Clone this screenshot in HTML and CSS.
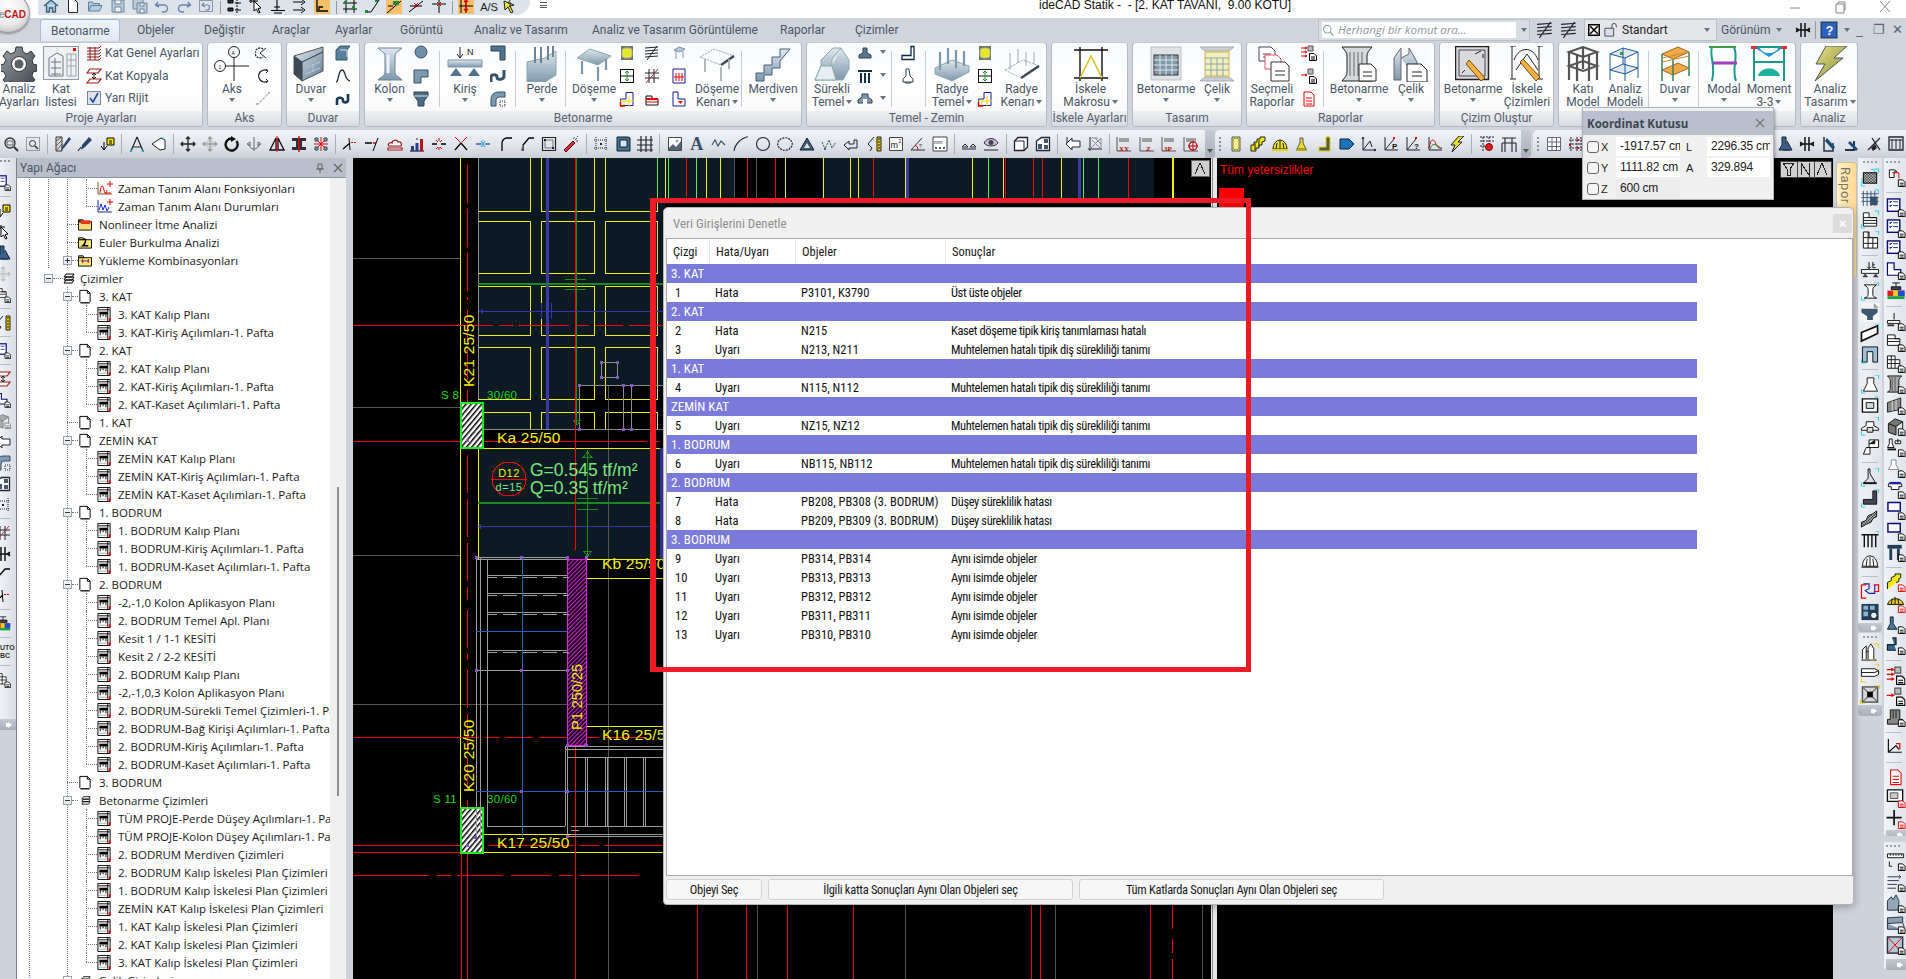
FILE: index.html
```html
<!DOCTYPE html>
<html lang="tr">
<head>
<meta charset="utf-8">
<title>ideCAD Statik</title>
<link rel="stylesheet" href="styles.css">
</head>
<body>
<svg class="sprite" width="0" height="0" aria-hidden="true">
<defs>
<linearGradient id="st" x1="0" y1="0" x2="1" y2="1"><stop offset="0" stop-color="#e6ecf2"/><stop offset="1" stop-color="#5d7c96"/></linearGradient>
<linearGradient id="st2" x1="0" y1="0" x2="0" y2="1"><stop offset="0" stop-color="#dfe7ee"/><stop offset="1" stop-color="#7d98ad"/></linearGradient>
<linearGradient id="gr" x1="0" y1="0" x2="1" y2="1"><stop offset="0" stop-color="#9aa0a8"/><stop offset="1" stop-color="#3f454d"/></linearGradient>
<linearGradient id="ye" x1="0" y1="0" x2="1" y2="1"><stop offset="0" stop-color="#e3e38a"/><stop offset="1" stop-color="#8a8a3a"/></linearGradient>
<pattern id="chk" width="3" height="3" patternUnits="userSpaceOnUse"><rect width="3" height="3" fill="#fff"/><rect width="1.5" height="1.5" fill="#000"/><rect x="1.5" y="1.5" width="1.5" height="1.5" fill="#000"/></pattern>
<pattern id="hatch" width="4" height="4" patternUnits="userSpaceOnUse" patternTransform="rotate(-50)"><rect width="4" height="4" fill="#fff"/><rect width="4" height="1.5" fill="#000"/></pattern>
<pattern id="mag" width="3" height="3" patternUnits="userSpaceOnUse" patternTransform="rotate(-45)"><rect width="3" height="3" fill="#000"/><rect width="3" height="1.2" fill="#d81fd8"/></pattern>
<g id="doc"><path d="M8.5 8.5h4.5l2.5 2.5v4.500H8.500z" fill="#fff" stroke="#000"/><path d="M10 12h4M10 14h4" stroke="#000"/></g>
<g id="docr"><path d="M8.500 8.500h4.500l2.500 2.500v4.500H8.500z" fill="#fff" stroke="#e00000"/><path d="M10 12h4M10 14h4" stroke="#e00000"/></g>
<path id="cy" d="M11 1.500h3.500V5M1.500 10.500v4H5" fill="none" stroke="#18d8ee"/>
<path id="yc" d="M11 1.500h3.500V5M1.500 10.500v4H5" fill="none" stroke="#f2c800"/>
</defs>
<!-- small / toolbar -->
<symbol id="home" viewBox="0 0 16 16"><path d="M1 8l7-6 7 6M3.500 7v7h3v-4h3v4h3V7" fill="#a9c6dc" stroke="#385d7c" stroke-width="1.300"/></symbol>
<symbol id="new" viewBox="0 0 16 16"><path d="M3.500 1.500h6l3 3v10h-9z" fill="#fff" stroke="#222"/></symbol>
<symbol id="open" viewBox="0 0 16 16"><path d="M1.500 13V4h4l1 1.500h6V8M1.500 13l2.500-5.500h11L12.500 13z" fill="#b5cde0" stroke="#5f7f9a"/></symbol>
<symbol id="save" viewBox="0 0 16 16"><path d="M2 2h12v12H2z" fill="#b9c9d8" stroke="#6f8aa2"/><path d="M5 2h6v4H5zM5 9h6v5H5z" fill="#eef2f6" stroke="#6f8aa2"/></symbol>
<symbol id="saves" viewBox="0 0 16 16"><path d="M1 1h10v10H1z" fill="#b9c9d8" stroke="#6f8aa2"/><path d="M5 5h10v10H5z" fill="#b9c9d8" stroke="#6f8aa2"/><path d="M8 5h4v3H8zM8 11h4v4H8z" fill="#eef2f6" stroke="#6f8aa2"/></symbol>
<symbol id="undo" viewBox="0 0 16 16"><path d="M4 4l-2.500 3L5 9M2 7h8a3.500 3.500 0 0 1 0 7H8" fill="none" stroke="#6e84b3" stroke-width="1.500"/></symbol>
<symbol id="redo" viewBox="0 0 16 16"><path d="M12 4l2.500 3L11 9M14 7H6a3.500 3.500 0 0 0 0 7h2" fill="none" stroke="#6e84b3" stroke-width="1.500"/></symbol>
<symbol id="undob" viewBox="0 0 16 16"><path d="M1.500 2.500h13v11h-13z" fill="none" stroke="#8a96a8"/><path d="M6 4.500l-2 2.500 3 2M4 7h5a2.500 2.500 0 0 1 0 5H7" fill="none" stroke="#6e84b3" stroke-width="1.200"/></symbol>
<symbol id="q1" viewBox="0 0 16 16"><path d="M2 2h5v3H2zM2 10h5v3H2z" fill="#333" stroke="#000"/><path d="M11 1v14" stroke="#000" stroke-dasharray="2 1"/><path d="M9 5h6M9 12h6" stroke="#000"/></symbol>
<symbol id="q2" viewBox="0 0 16 16"><path d="M3 1v4M6 1v4M1 3h9" stroke="#000"/><path d="M6 3l7 7-3 .500 2 4-1.500.500-2-4-2.500 2z" fill="#fff" stroke="#000"/></symbol>
<symbol id="q3" viewBox="0 0 16 16"><path d="M7 1v11M1 12.500h14M4 9h6M4 15h8" stroke="#000" stroke-width="1.100"/></symbol>
<symbol id="q4" viewBox="0 0 16 16"><path d="M1 4h10M1 12h10M9 1l4 3-4 3M9 9l4 3-4 3" fill="none" stroke="#000"/></symbol>
<symbol id="q5" viewBox="0 0 16 16"><rect width="16" height="16" fill="#f8bf6b"/><path d="M3 1v12h11M5 12V9h4" fill="none" stroke="#000" stroke-width="1.300"/></symbol>
<symbol id="q6" viewBox="0 0 16 16"><path d="M4 1v14M12 1v14M1 5h14M1 11h14" stroke="#000"/><path d="M2 3h3v3H2zM10 8h3v3h-3z" fill="#1d8a3a"/></symbol>
<symbol id="q7" viewBox="0 0 16 16"><path d="M1 14h6l8-12" fill="none" stroke="#000"/><path d="M1 12h3v3H1zM11 1h3v3h-3z" fill="#1d8a3a"/></symbol>
<symbol id="q8" viewBox="0 0 16 16"><rect width="16" height="16" fill="#f8bf6b"/><path d="M1 15L15 3" stroke="#000"/><path d="M7 3h6v4H7z" fill="#1d8a3a"/><path d="M2 8h5" stroke="#000"/></symbol>
<symbol id="q9" viewBox="0 0 16 16"><path d="M1 14L15 3M2 8h12" stroke="#000"/><path d="M6 5l4 4M10 5L6 9" stroke="#d00"/></symbol>
<symbol id="q10" viewBox="0 0 16 16"><path d="M1 6h14M8 1v14" stroke="#000"/><path d="M6 4l4 4M10 4L6 8" stroke="#d00"/></symbol>
<symbol id="q11" viewBox="0 0 16 16"><rect width="16" height="16" fill="#f8bf6b"/><path d="M3 1v14M1 8h14M8 1v14" stroke="#000"/><path d="M8 2v11M6 4l2-2 2 2M6 11l2 2 2-2" fill="none" stroke="#d00" stroke-width="1.300"/></symbol>
<symbol id="q13" viewBox="0 0 16 16"><path d="M2 3l10 4-4 1 3 6-2 1-3-6-3 3z" fill="#e6e62a" stroke="#222"/><path d="M9 1l-3 4h3l-2 4" fill="none" stroke="#222"/></symbol>
<symbol id="z1" viewBox="0 0 16 16"><circle cx="7" cy="7" r="5" fill="none" stroke="#333" stroke-width="1.300"/><path d="M4 5h6v4H4z" fill="none" stroke="#666"/><path d="M11 11l4 4" stroke="#333" stroke-width="2"/></symbol>
<symbol id="z2" viewBox="0 0 16 16"><path d="M1.500 1.500h13v13h-13z" fill="none" stroke="#555" stroke-dasharray="1 1"/><circle cx="7.500" cy="7.500" r="3" fill="none" stroke="#333"/><path d="M10 10l3 3" stroke="#333" stroke-width="1.500"/></symbol>
<symbol id="w1" viewBox="0 0 16 16"><path d="M1 1h6v14H1z" fill="#d8d8d8" stroke="#333"/><path d="M1 5l6-4M1 10l6-6M1 15l6-7" stroke="#555"/><path d="M14 1l2 2-7 9-3 2 1-3z" fill="#26456e"/></symbol>
<symbol id="w2" viewBox="0 0 16 16"><path d="M12 1l3 3-7 7-4 3 1-5z" fill="#26456e"/><path d="M4 11L1 15" stroke="#000"/></symbol>
<symbol id="w3" viewBox="0 0 16 16"><path d="M8 2h7v7H8z" fill="#ffe600" stroke="#000"/><path d="M10 5h3M10 7h3" stroke="#000"/><path d="M5 6v7M2 10l3 4 3-4" fill="none" stroke="#000"/></symbol>
<symbol id="w4" viewBox="0 0 16 16"><path d="M8 1L2 15M8 1l6 14M4 11h8" fill="none" stroke="#222" stroke-width="1.200"/><circle cx="2" cy="15" r="1.200" fill="#2aa"/><circle cx="14" cy="15" r="1.200" fill="#2aa"/></symbol>
<symbol id="w5" viewBox="0 0 16 16"><path d="M1 8l9-6 4 2v9l-5 1z" fill="#fff" stroke="#222"/><path d="M12 1v3" stroke="#2cc"/></symbol>
<symbol id="m1" viewBox="0 0 16 16"><path d="M8 1v14M1 8h14M6 3l2-2 2 2M6 13l2 2 2-2M3 6L1 8l2 2M13 6l2 2-2 2" fill="none" stroke="#222" stroke-width="1.300"/></symbol>
<symbol id="m2" viewBox="0 0 16 16"><path d="M8 1v14M1 8h14M6 3l2-2 2 2M6 13l2 2 2-2M3 6L1 8l2 2M13 6l2 2-2 2" fill="none" stroke="#999" stroke-width="1.300"/><path d="M5 5h6v6H5z" fill="none" stroke="#bbb"/></symbol>
<symbol id="m3" viewBox="0 0 16 16"><path d="M12.500 5A6 6 0 1 1 8 2.500" fill="none" stroke="#111" stroke-width="2.400"/><path d="M7 0l5 3-5 3z" fill="#111"/></symbol>
<symbol id="m4" viewBox="0 0 16 16"><path d="M8 1v14M3 8a5 5 0 0 0 10 0M1 8l3-2v4zM15 8l-3-2v4z" fill="none" stroke="#667"/></symbol>
<symbol id="m5" viewBox="0 0 16 16"><path d="M7 2v12H1zM9 2v12h6z" fill="none" stroke="#111" stroke-width="1.300"/><path d="M8 0v16" stroke="#d00"/></symbol>
<symbol id="m6" viewBox="0 0 16 16"><path d="M1 2h14v3H1zM1 11h14v3H1zM5 5h6v6H5z" fill="#26323c"/><path d="M8 0v16" stroke="#e00" stroke-width="1.500"/></symbol>
<symbol id="m7" viewBox="0 0 16 16"><path d="M8 1v14M1 8h14M4 4l8 8M12 4l-8 8" stroke="#e00"/><path d="M2 2h3v3H2zM11 2h3v3h-3zM2 11h3v3H2zM11 11h3v3h-3z" fill="#8aa" stroke="#345"/></symbol>
<symbol id="t1" viewBox="0 0 16 16"><path d="M1 13L8 7" stroke="#000" stroke-width="1.300"/><path d="M9 6.500h6" stroke="#d00" stroke-dasharray="2 1"/><path d="M7 2l1 12" stroke="#000"/></symbol>
<symbol id="t2" viewBox="0 0 16 16"><path d="M1 7h7" stroke="#000" stroke-width="1.500"/><path d="M9 7h3" stroke="#d00" stroke-width="1.500"/><path d="M14 2L9 15" stroke="#000"/></symbol>
<symbol id="t3" viewBox="0 0 16 16"><path d="M2 10c-2-2 1-4 3-3 0-3 5-4 6-1 3-1 4 2 3 4zM1 12h14v2H1z" fill="#fff" stroke="#a01818" stroke-width="1.200"/></symbol>
<symbol id="t4" viewBox="0 0 16 16"><path d="M1 15h14" stroke="#000"/><path d="M2 10h3v5H2z" fill="#2b3d8a"/><path d="M6.500 7h3v8h-3z" fill="#2b3d8a"/><path d="M11 3h3v12h-3z" fill="#b8101a"/><path d="M7 3h2" stroke="#222"/></symbol>
<symbol id="t5" viewBox="0 0 16 16"><path d="M1 8h5M10 8h5" stroke="#000" stroke-width="1.300"/><path d="M8 2v3M8 11v3M5 4l2 2M11 4L9 6M5 13l2-2M11 13l-2-2" stroke="#d00"/></symbol>
<symbol id="t6" viewBox="0 0 16 16"><path d="M2 14l6-7 6 7" fill="none" stroke="#000" stroke-width="1.300"/><path d="M2 1l5 5M14 1L9 6" stroke="#d00"/></symbol>
<symbol id="t7" viewBox="0 0 16 16"><path d="M1 8h5M10 8h5" stroke="#116"/><path d="M6 5l4 6M10 5l-4 6" stroke="#2ad"/><path d="M4 8h8M8 4v8" stroke="#2ad" stroke-dasharray="1 1"/></symbol>
<symbol id="t8" viewBox="0 0 16 16"><path d="M5 15V7a5 5 0 0 1 5-5h5" fill="none" stroke="#000" stroke-width="1.300"/></symbol>
<symbol id="t9" viewBox="0 0 16 16"><path d="M4 15V9l6-7h5" fill="none" stroke="#000" stroke-width="1.300"/><path d="M2 15l2-6" stroke="#888"/></symbol>
<symbol id="t10" viewBox="0 0 16 16"><path d="M1.500 1.500h13v13h-13z" fill="none" stroke="#222" stroke-width="1.200"/><path d="M4 4h8v8H4z" fill="none" stroke="#777"/><path d="M3 3h2v2H3zM11 11h2v2h-2z" fill="#222"/></symbol>
<symbol id="t11" viewBox="0 0 16 16"><path d="M1 14l9-9 2 2-9 9z" fill="#d5303a" stroke="#601"/><path d="M12 4l2-2M11 1v2M15 5h-2M14 1l1-1" stroke="#555"/></symbol>
<symbol id="g1" viewBox="0 0 16 16"><path d="M3 1v14M13 1v14M1 4h14M1 12h14" stroke="#223" stroke-dasharray="1 1"/><path d="M7 7h2v2H7z" fill="#222"/></symbol>
<symbol id="g2" viewBox="0 0 16 16"><path d="M2 1h11l2 1v13H2z" fill="#47708e" stroke="#123"/><path d="M5 4h7v7H5z" fill="#dbe6ee" stroke="#123"/></symbol>
<symbol id="g3" viewBox="0 0 16 16"><path d="M4 0v16M9 0v16M14 0v16M0 4h16M0 9h16M0 14h16" stroke="#223" stroke-width="1.200"/></symbol>
<symbol id="d1" viewBox="0 0 16 16"><path d="M1.500 1.500h13v13h-13z" fill="#fff" stroke="#444"/><path d="M2 12l4-4 3 3 5-6v9H2z" fill="#567"/><circle cx="10" cy="5" r="1.500" fill="#8ab"/></symbol>
<symbol id="d3" viewBox="0 0 16 16"><path d="M1 9l3-5 3 6 3-5 4 4" fill="none" stroke="#35506a" stroke-width="1.100"/></symbol>
<symbol id="d4" viewBox="0 0 16 16"><path d="M1 15C2 8 8 2 15 1" fill="none" stroke="#223" stroke-width="1.100"/><path d="M13 0h2v2h-2z" fill="#888"/></symbol>
<symbol id="d5" viewBox="0 0 16 16"><circle cx="8" cy="8" r="6.500" fill="none" stroke="#223" stroke-width="1.100"/></symbol>
<symbol id="d6" viewBox="0 0 16 16"><path d="M3 4c1-3 9-3 10 0 3 1 3 7 0 8-1 3-9 3-10 0-3-1-3-7 0-8z" fill="none" stroke="#223" stroke-dasharray="2 1" stroke-width="1.200"/></symbol>
<symbol id="d7" viewBox="0 0 16 16"><path d="M1 14L8 2l7 12z" fill="#3f5e72" stroke="#123"/><path d="M5 12l3-5 3 5z" fill="#d8e2ea"/></symbol>
<symbol id="d8" viewBox="0 0 16 16"><path d="M1 6l3 7 4-9 3 8 4-6" fill="none" stroke="#35506a" stroke-dasharray="2 1"/><circle cx="4" cy="13" r="1" fill="#35506a"/></symbol>
<symbol id="d9" viewBox="0 0 16 16"><path d="M1 9l5-4v3h5V4h3v8H6v2z" fill="none" stroke="#223"/></symbol>
<symbol id="d10" viewBox="0 0 16 16"><path d="M11 1h4v14h-4z" fill="#eac400" stroke="#222"/><path d="M12 3h2M12 6h2M12 9h2M12 12h2" stroke="#222"/><path d="M8 1L2 8l4 4-2 3" fill="none" stroke="#222"/></symbol>
<symbol id="d11" viewBox="0 0 16 16"><path d="M1.500 1.500h13v13h-13z" fill="#fff" stroke="#444"/><text x="2.500" y="12" class="ic">m</text><text x="10.500" y="7" class="is">2</text></symbol>
<symbol id="d12" viewBox="0 0 16 16"><path d="M1 14L12 2M1 14h14" fill="none" stroke="#333"/><path d="M8 14a5 5 0 0 0-3-5" fill="none" stroke="#d00"/><text x="9" y="12" class="is">?</text></symbol>
<symbol id="d13" viewBox="0 0 16 16"><path d="M1 1h14v14H1z" fill="#fff" stroke="#444"/><text x="2" y="8" class="is">mm</text><path d="M3 11h2v2H3zM7 11h2v2H7zM11 11h2v2h-2z" fill="#456"/></symbol>
<symbol id="l1" viewBox="0 0 16 16"><path d="M1 13h14M1 11l3-3 3 3zM9 11l3-3 3 3z" fill="none" stroke="#223"/></symbol>
<symbol id="l2" viewBox="0 0 16 16"><path d="M1 7c3-6 11-6 14 0-3 4-11 4-14 0z" fill="#cbd" stroke="#334"/><circle cx="8" cy="6.500" r="2.500" fill="#445"/><path d="M1 14h14" stroke="#223"/></symbol>
<symbol id="p1" viewBox="0 0 16 16"><path d="M1.500 5v9.500H11L14.500 11V1.500H5z" fill="#fff" stroke="#223" stroke-width="1.300"/><path d="M1.500 5h9.500v9.500" fill="none" stroke="#223"/></symbol>
<symbol id="p2" viewBox="0 0 16 16"><path d="M1.500 5l5-3.500h8v13h-13z" fill="#fff" stroke="#223" stroke-width="1.300"/><path d="M3 8h4v5H3zM9 3h4v4H9zM9 9h4v4H9z" fill="#46596b"/></symbol>
<symbol id="a1" viewBox="0 0 16 16"><path d="M1 8l6-6v3h8v6H7v3z" fill="#fff" stroke="#223"/><path d="M2 1v6" stroke="#223"/></symbol>
<symbol id="a2" viewBox="0 0 16 16"><path d="M3 1v14M1 13h14" stroke="#223"/><path d="M3 13L14 2M3 2h8M14 2v11M5 4l9 9M8 2l6 6" stroke="#889"/></symbol>
<symbol id="xy" viewBox="0 0 16 16"><path d="M1 1v14h14M3 3h10M3 5h10" fill="none" stroke="#555"/><text x="3" y="15" class="ir">XY</text></symbol>
<symbol id="zz" viewBox="0 0 16 16"><path d="M1 1v14h14M3 3h10M3 5h10" fill="none" stroke="#555"/><text x="7" y="15" class="ir">Z</text></symbol>
<symbol id="p3" viewBox="0 0 16 16"><path d="M1 1v14h14M3 3h10M3 5h10" fill="none" stroke="#555"/><text x="3" y="15" class="ir">3P</text></symbol>
<symbol id="pc" viewBox="0 0 16 16"><path d="M1 1v14h14M3 3h10M3 5h10" fill="none" stroke="#555"/><circle cx="10" cy="10" r="4" fill="none" stroke="#b00" stroke-width="1.200"/><path d="M10 5v10M5 10h10" stroke="#b00"/></symbol>
<symbol id="y1" viewBox="0 0 16 16"><path d="M4 1h8v14H4z" fill="#ecec22" stroke="#556"/><rect x="5" y="2" width="6" height="12" rx="3" fill="#fff27a" stroke="#888"/></symbol>
<symbol id="y2" viewBox="0 0 16 16"><path d="M1 15V9h3V6h3V3h3V1h5v4l-3 1v3H9v3H6v3z" fill="#f2e800" stroke="#223"/><path d="M5 14V7M9 11V4" stroke="#223"/></symbol>
<symbol id="y3" viewBox="0 0 16 16"><path d="M1 13a7 9 0 0 1 14 0z" fill="#f0e020" stroke="#223"/><path d="M4 13l1-6M8 13V4M12 13l-1-6" stroke="#223"/><path d="M0 14h16" stroke="#e8d400" stroke-width="2"/></symbol>
<symbol id="y4" viewBox="0 0 16 16"><path d="M6 2h3v5l3 6H3l3-6z" fill="#eedc20" stroke="#556"/><path d="M2 14h11" stroke="#bba800" stroke-width="2"/></symbol>
<symbol id="y5" viewBox="0 0 16 16"><path d="M10 1h4v14H3v-4h7z" fill="#585858" stroke="#e6d400"/></symbol>
<symbol id="y6" viewBox="0 0 16 16"><path d="M1 3h9l5 5-5 5H1z" fill="#1e72bc" stroke="#123"/></symbol>
<symbol id="gf1" viewBox="0 0 16 16"><path d="M2 1v13h13M2 14L9 5l2 6" fill="none" stroke="#223"/><path d="M2 1L1 3M2 1l1 2M15 14l-2-1M15 14l-2 1" stroke="#223"/></symbol>
<symbol id="gf2" viewBox="0 0 16 16"><path d="M2 1v13h13M2 14L11 3" fill="none" stroke="#223"/><path d="M10 1h2v2h-2z" fill="#e00"/><text x="9" y="13" class="ib">P</text></symbol>
<symbol id="gf3" viewBox="0 0 16 16"><path d="M2 1v13h13M2 14L11 3" fill="none" stroke="#223"/><path d="M10 1h2v2h-2z" fill="#e00"/><text x="9" y="13" class="ib">?</text></symbol>
<symbol id="gf4" viewBox="0 0 16 16"><path d="M2 1v13h13" fill="none" stroke="#223"/><path d="M2 12C4 1 7 3 9 8s4 4 6 4" fill="none" stroke="#d00"/><path d="M3 13C5 7 8 7 15 13" fill="none" stroke="#1a8a3a"/></symbol>
<symbol id="zap" viewBox="0 0 16 16"><path d="M10 0h5L9 6h4L3 16l3-7H2z" fill="#e8dc2a" stroke="#223"/></symbol>
<symbol id="gr1" viewBox="0 0 16 16"><path d="M1 1h14M1 5h14M4 1v14M10 1v14M1 10h9" stroke="#223" stroke-dasharray="2 1"/><circle cx="10" cy="11" r="3.500" fill="#e02020" stroke="#800"/></symbol>
<symbol id="gr2" viewBox="0 0 16 16"><path d="M1 2h14M1 7h14M4 2v14M11 2v14M1 7v9M15 7v9" stroke="#223" stroke-width="1.100"/></symbol>
<symbol id="gr3" viewBox="0 0 16 16"><path d="M1.500 1.500h13v13h-13zM1.500 6h13M1.500 10.500h13M6 1.500v13M10.500 1.500v13" fill="#fff" stroke="#667"/></symbol>
<symbol id="gr4" viewBox="0 0 16 16"><path d="M3 1v14M9 1v14M13 1v14M1 4h14M1 8h14M1 12h14" stroke="#223" stroke-dasharray="2 1"/><path d="M1 8h2v2H1zM9 3h2v2H9zM9 11h2v2H9z" fill="#d00"/></symbol>
<symbol id="v1" viewBox="0 0 16 16"><path d="M5 1h4v8l4 5H2l3-5z" fill="#3a628a" stroke="#123"/><path d="M10 5l5 9H6" fill="#3a5f88" stroke="#123"/></symbol>
<symbol id="v2" viewBox="0 0 16 16"><path d="M6 1v14M10 1v14M1 8h14M1 6l3 2-3 2M15 6l-3 2 3 2" fill="none" stroke="#111" stroke-width="1.500"/></symbol>
<symbol id="v3" viewBox="0 0 16 16"><path d="M3 1v14h9V7" fill="none" stroke="#234" stroke-width="1.500"/><path d="M6 2l8 9-2 3-8-9z" fill="#1f4d7a"/></symbol>
<symbol id="v4" viewBox="0 0 16 16"><path d="M1 14h9V5" fill="none" stroke="#234" stroke-width="2"/><path d="M6 5l8 8-2 2-8-8z" fill="#1f4d7a"/></symbol>
<symbol id="v5" viewBox="0 0 16 16"><path d="M2 14L14 2M6 2l8 12" stroke="#223" stroke-width="1.300"/><path d="M5 12l4-4 2 4-4 3z" fill="#223"/></symbol>
<symbol id="v6" viewBox="0 0 16 16"><path d="M1 1h14v13H1z" fill="none" stroke="#223" stroke-width="1.300"/><path d="M4 3v10M8 3v10M12 3v10M2 4h12" stroke="#223"/></symbol>
<!-- ribbon small -->
<symbol id="s-genel" viewBox="0 0 16 16"><path d="M1 3h12l2-2M1 6h12l2-2M1 9h12l2-2M1 12h12l2-2M1 15h12l2-2" fill="none" stroke="#8a1a1a"/><path d="M4 2v13M9 2v13" stroke="#8a1a1a"/></symbol>
<symbol id="s-kop" viewBox="0 0 16 16"><path d="M1 5L4 1h11l-3 4zM1 15l3-4h11l-3 4z" fill="#fff" stroke="#a01818" stroke-width="1.200"/><path d="M8 5v6M6 7l2-2 2 2M6 9l2 2 2-2" fill="none" stroke="#222"/></symbol>
<symbol id="s-chk" viewBox="0 0 16 16"><rect x="1.500" y="1.500" width="13" height="13" fill="#dfe4ea" stroke="#7a8794"/><path d="M4 8l3 4 5-9" fill="none" stroke="#1f4d9a" stroke-width="1.600"/></symbol>
<symbol id="s-a1" viewBox="0 0 16 16"><path d="M8 4a5 5 0 1 0 0 8" fill="none" stroke="#223" stroke-dasharray="2 1" stroke-width="1.300"/><path d="M5 8l6-5M5 8l6 5" stroke="#223"/></symbol>
<symbol id="s-a2" viewBox="0 0 16 16"><path d="M13 3a6 6 0 1 0 0 10" fill="none" stroke="#223" stroke-width="1.300"/><path d="M11 1l2 2-2 2M11 11l2 2-2 2" stroke="#223" fill="none"/></symbol>
<symbol id="s-a3" viewBox="0 0 16 16"><path d="M2 14L14 2" stroke="#b5b5b5" stroke-dasharray="3 1" stroke-width="1.300"/><path d="M1 12h2v2H1zM13 1h2v2h-2z" fill="#b5b5b5"/></symbol>
<symbol id="s-d1" viewBox="0 0 16 16"><path d="M1 5l4-4h10l-3 4v10H1z" fill="#577f9b" stroke="#33566e"/><path d="M5 5h7v7" fill="none" stroke="#e0e8ee"/></symbol>
<symbol id="s-d2" viewBox="0 0 16 16"><path d="M1 14c3 0 2-12 6-12s2 10 8 11" fill="none" stroke="#1a2a3a" stroke-width="1.300"/></symbol>
<symbol id="s-d3" viewBox="0 0 16 16"><path d="M2 14V9c0-3 6-3 6 0v1c0 2 5 2 5-1V3" fill="none" stroke="#1a3a5a" stroke-width="2.600"/></symbol>
<symbol id="s-k1" viewBox="0 0 16 16"><circle cx="8" cy="7" r="6" fill="#6f8ea8" stroke="#35536c"/></symbol>
<symbol id="s-k2" viewBox="0 0 16 16"><path d="M1 2h14v7H8v6H1z" fill="#7d9ab0" stroke="#35536c"/></symbol>
<symbol id="s-k3" viewBox="0 0 16 16"><path d="M1 1h14v4l-4 5v5H5v-5L1 5z" fill="#4e6c84" stroke="#2c4355"/><path d="M1 5h14" stroke="#dfe8ef"/></symbol>
<symbol id="s-b1" viewBox="0 0 16 16"><path d="M1 1h14v14h-5V6H1z" fill="#4f7590" stroke="#2c4355"/></symbol>
<symbol id="s-b2" viewBox="0 0 16 16"><path d="M1 14V9c0-3 6-3 6 0v1c0 2 7 2 7-2V2" fill="none" stroke="#35536c" stroke-width="3"/></symbol>
<symbol id="s-b3" viewBox="0 0 16 16"><path d="M1 15V8a7 7 0 0 1 7-7h7v5H9a3 3 0 0 0-3 3v6z" fill="#7d9ab0" stroke="#35536c"/><path d="M10 10h5v5h-5z" fill="none" stroke="#223" stroke-dasharray="1 1"/></symbol>
<symbol id="s-ye" viewBox="0 0 16 16"><path d="M2 1h12v14H2z" fill="#6f7a5a"/><rect x="3" y="3" width="10" height="10" rx="3" fill="#e8e82a" stroke="#aaa"/></symbol>
<symbol id="s-bx" viewBox="0 0 16 16"><rect x="1.500" y="1.500" width="13" height="13" fill="#fff" stroke="#111"/><path d="M2 8h12" stroke="#111"/><path d="M8 3v10M6 5l2-2 2 2M6 11l2 2 2-2" fill="none" stroke="#0a9a2a"/></symbol>
<symbol id="s-crn" viewBox="0 0 16 16"><path d="M7 1.500h7v7H14v6H1.500V8H7z" fill="#fff" stroke="#1a1a9a"/><path d="M1 10h14M5 10v5M10 5v10" stroke="#e8d400"/><path d="M1.500 11v4H6" fill="none" stroke="#e00" stroke-width="1.500"/></symbol>
<symbol id="s-st" viewBox="0 0 16 16"><path d="M1 3l13-1M1 6l13-1M1 9l13-1M1 12l13-1M3 15L13 1" stroke="#223"/></symbol>
<symbol id="s-hs" viewBox="0 0 16 16"><path d="M1 5h14M1 10h14M5 1v14M10 1v14" stroke="#223"/><path d="M2 15L14 1" stroke="#a33"/></symbol>
<symbol id="s-bl" viewBox="0 0 16 16"><path d="M2 5h6v3h6v6H2z" fill="#fff" stroke="#111"/><path d="M2 8h12" stroke="#e00" stroke-width="2"/><path d="M2 11h12" stroke="#e00"/></symbol>
<symbol id="s-tb" viewBox="0 0 16 16"><path d="M3 5l5-3 6 2-5 3zM5 6v8M12 6v7" fill="#b5c7d6" stroke="#7d98ad"/></symbol>
<symbol id="s-r1" viewBox="0 0 16 16"><path d="M2 1h12v14H2z" fill="#fff" stroke="#1a1a9a"/><path d="M5 5v8M8 5v8M11 5v8M3 9h10" stroke="#d00" fill="none"/></symbol>
<symbol id="s-r2" viewBox="0 0 16 16"><path d="M2 1v14h12V8H7V1z" fill="#fff" stroke="#1a1a9a"/><path d="M7 10h5l-2.500 3z" fill="#e00"/></symbol>
<symbol id="s-t1" viewBox="0 0 16 16"><path d="M6 3h4v5l4 2v3H2v-3l4-2z" fill="#5a7a93" stroke="#2c4355"/></symbol>
<symbol id="s-t2" viewBox="0 0 16 16"><path d="M1 2h14v2H1z" fill="#12303f"/><path d="M3 5h2v10H3zM7 5h2v10H7zM11 5h2v10h-2z" fill="#12303f"/></symbol>
<symbol id="s-t3" viewBox="0 0 16 16"><path d="M5 3h6v3l4 3v3H1V9l4-3z" fill="#7e97aa" stroke="#2c4355"/><path d="M6 8h4v5H6z" fill="#fff"/></symbol>
<symbol id="s-l" viewBox="0 0 16 16"><path d="M11 1.500h3v13H2v-4h9z" fill="#fff" stroke="#0c2a4a" stroke-width="1.300"/></symbol>
<symbol id="s-ft" viewBox="0 0 16 16"><path d="M6 1h3l1 7 3 3v3H3v-3l3-3z" fill="#fff" stroke="#2c4355"/><path d="M5 14v1h6v-1" stroke="#2c4355" fill="none"/></symbol>
<symbol id="s-rp1" viewBox="0 0 16 16"><path d="M0 3h6M0 7h6M0 11h6" stroke="#e00"/><path d="M4 2l2 1-2 1M4 6l2 1-2 1M4 10l2 1-2 1" stroke="#e00" fill="none"/><path d="M7 1h5v5H7z" fill="#bbb" stroke="#555"/><use href="#doc"/></symbol>
<symbol id="s-rp2" viewBox="0 0 16 16"><path d="M0 7h6" stroke="#e00"/><path d="M4 6l2 1-2 1" stroke="#e00" fill="none"/><path d="M7 1h5v5H7z" fill="#bbb" stroke="#555"/><use href="#doc"/></symbol>
<symbol id="s-rp3" viewBox="0 0 16 16"><path d="M3 1h7l3 3v11H3z" fill="#fff" stroke="#e00"/><path d="M5 7h6M5 10h6M5 13h6" stroke="#e00"/></symbol>
<!-- ribbon big -->
<symbol id="b-gear" viewBox="0 0 36 36"><path d="M15 1h6l1 5 4 2 4-3 4 5-3 4 1 4 4 1v6l-4 1-1 4 3 4-5 4-3-3-4 2-1 4h-6l-1-4-4-2-4 3-4-4 3-4-2-4-4-1v-6l4-1 2-4-3-4 4-5 4 3 4-2z" fill="url(#gr)" stroke="#333"/><circle cx="18" cy="18" r="7.500" fill="#fff" stroke="#333"/><circle cx="18" cy="18" r="4.500" fill="#5a6068"/></symbol>
<symbol id="b-list" viewBox="0 0 36 36"><rect x="0.500" y="0.500" width="35" height="33" fill="#eef0f2" stroke="#8d9aa5"/><path d="M6 12l8-5 6 3v20H6zM8 16h10M8 22h10M8 28h10M12 12v18" fill="none" stroke="#6d7882"/><path d="M24 8h9v22h-9zM24 14h9M24 20h9M28 8v22" fill="none" stroke="#9aa5ae"/><path d="M30 2h3v3h-3z" fill="#e00"/></symbol>
<symbol id="b-aks" viewBox="0 0 36 36"><circle cx="20" cy="6" r="5.500" fill="none" stroke="#222"/><circle cx="6" cy="20" r="5.500" fill="none" stroke="#222"/><path d="M20 11v24M11 20h24" stroke="#222"/><text x="17.500" y="9" class="is">A</text><text x="4.500" y="23" class="is">1</text></symbol>
<symbol id="b-duvar" viewBox="0 0 36 36"><path d="M1 10L30 1v24L9 35 1 28z" fill="url(#st)" stroke="#555"/><path d="M1 10l8 6v19M9 16L30 6" fill="none" stroke="#333"/><path d="M1 10v18l8 7V16z" fill="#3c4a55"/><path d="M13 22l14-6M13 28l14-6M20 18v8" stroke="#b9c6d0"/></symbol>
<symbol id="b-kolon" viewBox="0 0 36 36"><path d="M6 2h24c-2 3-6 3-7 7v18c1 4 5 4 7 7H6c2-3 6-3 7-7V9C12 5 8 5 6 2z" fill="url(#st2)" stroke="#6c8397"/><path d="M16 9v18" stroke="#eef3f7" stroke-width="3"/></symbol>
<symbol id="b-kiris" viewBox="0 0 36 36"><path d="M1 14h34v7H1z" fill="url(#st2)" stroke="#7d98ad"/><path d="M3 30l6-8 6 8zM21 30l6-8 6 8z" fill="#4f7590"/><path d="M13 1v11M10 8l3 4 3-4" fill="none" stroke="#222"/><text x="20" y="9" class="ic">N</text></symbol>
<symbol id="b-perde" viewBox="0 0 36 36"><path d="M3 16l18-4 11-7v24l-11 7H3z" fill="url(#st2)" stroke="#8aa"/><path d="M11 1v16M17 1v16M24 0v14M29 0v11" stroke="#6c8397" stroke-width="2"/></symbol>
<symbol id="b-dos" viewBox="0 0 36 36"><path d="M1 12L14 3l21 7-13 9z" fill="url(#st2)" stroke="#8aa"/><path d="M6 15v13M22 21v14M30 13v11" stroke="#7d98ad" stroke-width="2.200"/></symbol>
<symbol id="b-dosk" viewBox="0 0 36 36"><path d="M1 11l14-8 20 7-13 9z" fill="none" stroke="#9aa" stroke-dasharray="2 1"/><path d="M22 19l13-9" stroke="#3a4a58" stroke-width="2.500"/><path d="M6 13v13M22 21v14M30 13v10" stroke="#9aa" stroke-width="1.600"/></symbol>
<symbol id="b-mer" viewBox="0 0 36 36"><path d="M1 35V27H9V19h8v-8h8V3h10L25 15v7h-8v7H9v6z" fill="url(#st2)" stroke="#40607c"/></symbol>
<symbol id="b-sur" viewBox="0 0 36 36"><path d="M1 34l6-14V14l12-12 8 0 8 12v9L29 34z" fill="url(#st2)" stroke="#8aa"/><path d="M7 20h11l4 14H1zM18 20v-7L27 2" fill="#e6edf2" stroke="#8aa"/></symbol>
<symbol id="b-rad" viewBox="0 0 36 36"><path d="M1 22l17-8 17 6v6L18 35 1 28z" fill="url(#st2)" stroke="#8aa"/><path d="M6 6v18M14 2v16M22 4v18M30 5v15" stroke="#7d98ad" stroke-width="2.200"/></symbol>
<symbol id="b-radk" viewBox="0 0 36 36"><path d="M1 24l18-10 16 6-18 12z" fill="none" stroke="#9aa" stroke-dasharray="2 1"/><path d="M17 32l18-12" stroke="#3a4a58" stroke-width="2.500"/><path d="M6 7v17M14 3v14M22 6v14M30 6v12" stroke="#9aa"/></symbol>
<symbol id="b-isk" viewBox="0 0 36 36"><path d="M1 4h34M1 32h34M7 1v34M29 1v34" stroke="#111" stroke-width="1.400"/><path d="M7 32L18 10l11 22" fill="none" stroke="#e0c020" stroke-width="1.600"/></symbol>
<symbol id="b-tb" viewBox="0 0 36 36"><rect x="3" y="1" width="30" height="33" fill="#dfe3e6" stroke="#b9c0c7"/><rect x="6" y="9" width="24" height="20" fill="#7f99a8" stroke="#333"/><path d="M6 14h24M6 19h24M6 24h24M12 9v20M18 9v20M24 9v20" stroke="#dfe7ec"/></symbol>
<symbol id="b-tc" viewBox="0 0 36 36"><path d="M1 1h34l-5 4H6zM1 35h34l-5-4H6z" fill="#c9ced2" stroke="#aab"/><rect x="6" y="6" width="24" height="24" fill="#f4eebc" stroke="#c8b14a"/><path d="M6 12h24M6 18h24M6 24h24M12 12v18M18 12v18M24 12v18" stroke="#8aa"/></symbol>
<symbol id="b-sec" viewBox="0 0 36 36"><path d="M5 1h12l4 4v10H5z" fill="#fff" stroke="#445"/><path d="M9 8h8M9 11h8" stroke="#445"/><path d="M11 9h12l4 4v10H11z" fill="#fff" stroke="#e25060"/><path d="M17 16h14l4 4v15H17z" fill="#fff" stroke="#333"/><path d="M21 25h10M21 29h10" stroke="#333"/></symbol>
<symbol id="b-rb" viewBox="0 0 36 36"><path d="M1 1h30c-3 4-5 5-5 9v16c0 4 2 5 5 9H1c3-4 5-5 5-9V10C6 6 4 5 1 1z" fill="#d5d8dc" stroke="#222"/><path d="M9 6v24M13 6v24M17 6v24M21 6v24" stroke="#666"/><path d="M18 18h12l5 5v12H18z" fill="#fff" stroke="#222"/><path d="M22 26h9M22 30h9" stroke="#222"/></symbol>
<symbol id="b-rc" viewBox="0 0 36 36"><path d="M1 34V12L8 2v32zM8 12l8-4V2l8 14v18" fill="url(#st2)" stroke="#667"/><path d="M14 18h14l6 6v12H14z" fill="#fff" stroke="#222"/><path d="M19 26h10M19 30h10" stroke="#222"/></symbol>
<symbol id="b-cb" viewBox="0 0 36 36"><rect x="0.500" y="0.500" width="33" height="33" fill="#d9dade" stroke="#222" stroke-width="1.500"/><path d="M4 4h26v26H4z" fill="none" stroke="#444"/><path d="M20 8l6-3M28 8v4M7 27l3-3" stroke="#222"/><path d="M14 14l16 18-4 3L11 18z" fill="#f2b040" stroke="#7a4c10"/></symbol>
<symbol id="b-ci" viewBox="0 0 36 36"><path d="M3 0v33M1 0h6M1 33h6M30 0v33M28 0h6M28 33h6M5 14C10 0 24 0 29 14M7 24l11-16 11 16" fill="none" stroke="#222"/><path d="M14 13l17 18-4 4-16-19z" fill="#f2b040" stroke="#7a4c10"/></symbol>
<symbol id="b-kati" viewBox="0 0 36 36"><path d="M4 6l14-5 14 5-14 5zM4 20l14-5 14 5-14 5z" fill="none" stroke="#555" stroke-width="2"/><path d="M4 6v28M12 9v26M24 9v26M32 6v28M18 1v22" stroke="#555" stroke-width="2.200"/></symbol>
<symbol id="b-amo" viewBox="0 0 36 36"><path d="M3 8l13-6 15 4-13 6zM3 24l13-6 15 4-13 6z" fill="#dfe8ee" stroke="#1a5a9a"/><path d="M3 8v26M18 12v23M31 6v26M16 2v16" stroke="#1a5a9a"/><path d="M13 6h3v3h-3z" fill="#20a040"/></symbol>
<symbol id="b-adu" viewBox="0 0 36 36"><path d="M5 8l16-7 11 5-16 7zM5 24l16-7 11 5-16 7z" fill="#f0a848" stroke="#a06a18"/><path d="M5 8v27M16 13v22M32 6v24" stroke="#3a8a5a" stroke-width="1.600"/><path d="M5 12l27-6M5 16l27-6" stroke="#d08a30"/></symbol>
<symbol id="b-mod" viewBox="0 0 36 36"><path d="M3 1h27M6 1c-3 10 4 16 0 34M28 1c5 12-3 20 2 34" fill="none" stroke="#189a88" stroke-width="2"/><path d="M7 17h24" stroke="#a040c0" stroke-width="3"/><path d="M3 1h27" stroke="#3aa040" stroke-width="2"/></symbol>
<symbol id="b-mom" viewBox="0 0 36 36"><path d="M3 1v34M33 1v34M3 1h30M3 16h30" fill="none" stroke="#189a88" stroke-width="2"/><path d="M3 1l6 0c0 8 18 8 18 0h6L18 11z" fill="#1f8fe0"/><path d="M7 30c2-10 20-10 22 0z" fill="#20b0a0"/><path d="M0 0h6v3H0zM30 0h6v3h-6z" fill="#e03030"/></symbol>
<symbol id="b-zap" viewBox="0 0 36 36"><path d="M14 0h21L22 12h9L3 35l10-17H4z" fill="url(#ye)" stroke="#555"/></symbol>
<!-- strip icons -->
<symbol id="c1" viewBox="0 0 20 20"><use href="#cy"/><rect x="3" y="5" width="14" height="11" fill="url(#chk)" stroke="#000"/><path d="M15 1h4v4M1 15v4h4" fill="none" stroke="#18d8ee"/></symbol>
<symbol id="c2" viewBox="0 0 20 20"><path d="M3 2v16M7 2v16M11 2v16M15 2v16M1 5h18M1 9h18M1 13h18" stroke="#3a5a78"/><rect x="10" y="8" width="8" height="9" fill="#35536c"/><path d="M15 1h4v4" fill="none" stroke="#18d8ee"/></symbol>
<symbol id="c3" viewBox="0 0 20 20"><path d="M3 3h6v5h8v9H3zM3 8h14M3 11h14M3 14h14" fill="#fff" stroke="#111"/><path d="M15 1h4v4M1 15v4h4" fill="none" stroke="#18d8ee"/></symbol>
<symbol id="c4" viewBox="0 0 20 20"><path d="M3 1h6v6h9v11H3zM3 7h15M3 13h15M8 1v17M13 7v11" fill="#fff" stroke="#111"/><path d="M15 0h4v4" fill="none" stroke="#18d8ee"/></symbol>
<symbol id="c5" viewBox="0 0 20 20"><path d="M1 9h18v4H1z" fill="#fff" stroke="#111"/><path d="M2 17l3-4 3 4zM13 17l3-4 3 4z" fill="#445"/><path d="M9 1v7M7 6l2 2 2-2M13 1v6h3M13 4h2" fill="none" stroke="#111"/></symbol>
<symbol id="c6" viewBox="0 0 20 20"><path d="M4 3h13c-3 2-4 3-4 5v5c0 2 1 3 4 4H4c3-1 4-2 4-4V8c0-2-1-3-4-5z" fill="#fff" stroke="#111"/><path d="M15 0h4v4M1 15v4h4" fill="none" stroke="#18d8ee"/></symbol>
<symbol id="c7" viewBox="0 0 20 20"><rect width="20" height="20" fill="#f5f5f5"/><path d="M14 0l5 5h-5z" fill="#999"/><path d="M1 6h17v4l-5 4v4H7v-4L1 10z" fill="#3d5a72"/></symbol>
<symbol id="c8" viewBox="0 0 20 20"><path d="M1 18V9L18 2v8z" fill="#fff" stroke="#111" stroke-width="1.800"/><path d="M15 0h4v4" fill="none" stroke="#18d8ee"/></symbol>
<symbol id="c9" viewBox="0 0 20 20"><path d="M2 2h16v16h-5V7H7v11H2z" fill="#9ec0da" stroke="#111"/><path d="M1 15v4h4" fill="none" stroke="#18d8ee"/></symbol>
<symbol id="c10" viewBox="0 0 20 20"><path d="M7 3h7v6l4 8H3l4-8z" fill="#fff" stroke="#111"/><path d="M15 0h4v4M1 15v4h4" fill="none" stroke="#18d8ee"/></symbol>
<symbol id="c11" viewBox="0 0 20 20"><path d="M2 3h16v14H2z" fill="#fff" stroke="#111" stroke-width="1.500"/><path d="M6 7h8v6H6z" fill="#cdd" stroke="#111"/><path d="M15 1h4" stroke="#18d8ee"/></symbol>
<symbol id="c12" viewBox="0 0 20 20"><path d="M6 5h8v4l5 3v2H1v-2l5-3z" fill="#fff" stroke="#111"/><path d="M7 11h6v5H7z" fill="#ddd" stroke="#111"/><path d="M15 0h4v4M1 15v4h4" fill="none" stroke="#18d8ee"/></symbol>
<symbol id="c13" viewBox="0 0 20 20"><path d="M3 17l3-7h4v7zM9 2h10v8H9z" fill="#fff" stroke="#111"/><path d="M9 6h6V2" fill="#000" stroke="#111"/></symbol>
<symbol id="c14" viewBox="0 0 20 20"><path d="M8 1h2v5l6 10H3l5-5z" fill="#dde" stroke="#111"/><path d="M3 16h14" stroke="#111" stroke-width="2"/><path d="M15 0h4v4M1 15v4h4" fill="none" stroke="#18d8ee"/></symbol>
<symbol id="c15" viewBox="0 0 20 20"><path d="M13 2h4v14H3v-5h10z" fill="#445" stroke="#111"/><path d="M15 0h4v4M1 15v4h4" fill="none" stroke="#18d8ee"/></symbol>
<symbol id="c16" viewBox="0 0 20 20"><path d="M1 13l5-2 2-5 5-2 4-3v6l-4 2-2 4-5 2-5 3z" fill="url(#chk)" stroke="#111"/></symbol>
<symbol id="c17" viewBox="0 0 20 20"><path d="M1 4h18M4 4v13M8 4v13M12 4v13M16 4v13" stroke="#111" stroke-width="1.500"/><path d="M15 0h4v2" fill="none" stroke="#18d8ee"/></symbol>
<symbol id="c18" viewBox="0 0 20 20"><path d="M2 15a8 11 0 0 1 16 0z" fill="#fff" stroke="#111"/><path d="M6 15l1-8M10 15V5M14 15l-1-8M1 16h18" stroke="#111"/></symbol>
<symbol id="c19" viewBox="0 0 20 20"><path d="M3 2h6v5l-4 2 4 3h6V3" fill="none" stroke="#1a1ac0" stroke-width="1.200"/><path d="M1 3h5M1 3v14h5" fill="none" stroke="#e00" stroke-width="1.300"/><path d="M14 3h5v7h-5" fill="none" stroke="#e00" stroke-width="1.300"/></symbol>
<symbol id="c20" viewBox="0 0 20 20"><rect x="1" y="1" width="18" height="17" fill="#1f3e58"/><path d="M3 3h5v4H3zM10 3h5v4h-5zM3 9h5v5H3z" fill="#8fb3ce"/><circle cx="14" cy="13" r="3.500" fill="#e6eef4" stroke="#111"/></symbol>
<symbol id="c21" viewBox="0 0 20 20"><path d="M2 17V7l4-4v14M8 17V5l3-4 3 5v11M6 9h2M1 18h16" fill="#fff" stroke="#111"/><path d="M14 1h5v4M14 18h-3" fill="none" stroke="#f2c800"/></symbol>
<symbol id="c22" viewBox="0 0 20 20"><path d="M1 5h14l4 2v4l-4 2H1zM1 9h14l4-2" fill="#fff" stroke="#111"/><path d="M15 0h4v3M1 15v4h5" fill="none" stroke="#f2c800"/></symbol>
<symbol id="c23" viewBox="0 0 20 20"><rect x="2" y="2" width="16" height="16" fill="#d4d5d9" stroke="#555" stroke-width="1.500"/><path d="M3 3l14 14M17 3L3 17" stroke="#222"/><rect x="7" y="7" width="6" height="6" fill="#000"/><path d="M14 0h6v4M0 16v4h5" fill="none" stroke="#f2c800"/></symbol>
<symbol id="e1" viewBox="0 0 20 20"><path d="M3 2h6l2 2H8v6H3z" fill="#fff" stroke="#111"/><path d="M6 5h7v6" fill="none" stroke="#e00"/><g transform="translate(4 4) scale(1)"><use href="#doc"/></g></symbol>
<symbol id="e2" viewBox="0 0 20 20"><rect x="1" y="1" width="13" height="13" fill="#fff" stroke="#0a0a7a" stroke-width="1.500"/><path d="M3 4l1 1 2-2M3 8l1 1 2-2M7 4h5M7 8h5" stroke="#0a2aa0"/><g transform="translate(4 4)"><use href="#doc"/></g></symbol>
<symbol id="e3" viewBox="0 0 20 20"><path d="M1 2h7v7h7v6H1z" fill="#fff" stroke="#0a0a7a" stroke-width="1.300"/><g transform="translate(4 4)"><use href="#doc"/></g></symbol>
<symbol id="e4" viewBox="0 0 20 20"><path d="M6 1h8M10 1v4M5 5h10v3H5z" stroke="#111" fill="#445"/><path d="M1 9h18v6H1z" fill="#e02020"/><path d="M7 9h7v6H7z" fill="#e8d020"/><path d="M12 9h7v6h-7z" fill="#2050d0"/><path d="M1 15h18v3H1z" fill="#20a040"/></symbol>
<symbol id="e5" viewBox="0 0 20 20"><path d="M8 1v7M1 9h13v3H1z" fill="#fff" stroke="#111"/><path d="M1 14h7" stroke="#333" stroke-width="2"/><g transform="translate(4 4)"><use href="#doc"/></g></symbol>
<symbol id="e6" viewBox="0 0 20 20"><path d="M1 2h8v4h5v7H1zM1 6h13M1 9h13" fill="#fff" stroke="#111"/><g transform="translate(4 4)"><use href="#doc"/></g></symbol>
<symbol id="e7" viewBox="0 0 20 20"><path d="M1 2h8v4h5v9H1zM5 2v13M9 6v9M1 6h8M1 10h13" fill="#fff" stroke="#111"/><g transform="translate(4 4)"><use href="#doc"/></g></symbol>
<symbol id="e8" viewBox="0 0 20 20"><path d="M1 1h15c-2 2-3 3-3 5v8c0 2 1 3 3 4H1c2-1 3-2 3-4V6C4 4 3 3 1 1z" fill="#aaa" stroke="#111"/><path d="M6 2v15M9 2v15" stroke="#555"/><g transform="translate(4 4)"><use href="#doc"/></g></symbol>
<symbol id="e9" viewBox="0 0 20 20"><path d="M1 7l14-5v12L1 17z" fill="#888" stroke="#222"/><path d="M6 5v11M10 4v11" stroke="#ddd"/><g transform="translate(4 4)"><use href="#doc"/></g></symbol>
<symbol id="e10" viewBox="0 0 20 20"><path d="M2 7l7-5 8 3-7 5zM2 7v9l8 3v-9M17 5v8" fill="#777" stroke="#111"/><g transform="translate(4 4)"><use href="#doc"/></g></symbol>
<symbol id="e11" viewBox="0 0 20 20"><path d="M3 1h3v5l2 4H1l2-4zM9 3h6v3H9zM12 1v4" fill="#fff" stroke="#111"/><path d="M1 12h9" stroke="#111" stroke-width="2"/><g transform="translate(4 4)"><use href="#doc"/></g></symbol>
<symbol id="e12" viewBox="0 0 20 20"><path d="M5 1h5v5l3 5H2l3-5z" fill="#fff" stroke="#888"/><g transform="translate(4 4)"><use href="#doc"/></g></symbol>
<symbol id="e13" viewBox="0 0 20 20"><path d="M2 4h14v3h-3v3H5V7H2z" fill="#fff" stroke="#111"/><path d="M3 3h12" stroke="#1a1ac0" stroke-width="2"/><g transform="translate(4 4)"><use href="#doc"/></g></symbol>
<symbol id="e14" viewBox="0 0 20 20"><path d="M1.500 1.500h13v9h-13z" fill="#fff" stroke="#0a0a7a" stroke-width="1.500"/><g transform="translate(4 4)"><use href="#doc"/></g></symbol>
<symbol id="e15" viewBox="0 0 20 20"><path d="M1 2h15v4H1z" fill="#1f3e58"/><path d="M3 6h3v12H3zM11 6h3v12h-3z" fill="#1f3e58"/><g transform="translate(4 4)"><use href="#doc"/></g></symbol>
<symbol id="e16" viewBox="0 0 20 20"><path d="M1 17V10l4-2V5l4-2V1h6v4l-2 1v3l-3 1" fill="#f2e800" stroke="#111"/><g transform="translate(4 4)"><use href="#docr"/></g></symbol>
<symbol id="e17" viewBox="0 0 20 20"><path d="M1 11a9 9 0 0 1 17 0z" fill="#e8d020" stroke="#111"/><path d="M5 11l1-6M9 11V3M13 11l-1-6" stroke="#111"/><g transform="translate(4 4)"><use href="#docr"/></g></symbol>
<symbol id="e18" viewBox="0 0 20 20"><path d="M4 2h3v7l4 6H1l3-6z" fill="#4e7a9c" stroke="#123"/><g transform="translate(4 4)"><use href="#doc"/></g></symbol>
<symbol id="e19" viewBox="0 0 20 20"><path d="M6 2h4v7H1v6h9" fill="#38648c" stroke="#123" stroke-width="1.300"/><g transform="translate(4 4)"><use href="#doc"/></g></symbol>
<symbol id="e20" viewBox="0 0 20 20"><use href="#s-rp1" width="20" height="20"/></symbol>
<symbol id="e21" viewBox="0 0 20 20"><use href="#s-rp2" width="20" height="20"/></symbol>
<symbol id="e22" viewBox="0 0 20 20"><path d="M4 2h10v10h3v5H1v-5h3z" fill="#888" stroke="#111"/><path d="M7 3v8M10 3v8" stroke="#222"/><g transform="translate(4 4)"><use href="#doc"/></g></symbol>
<symbol id="e23" viewBox="0 0 20 20"><path d="M2 1v14h14M2 15L10 8l3 4" fill="none" stroke="#111" stroke-width="1.300"/><path d="M10 6h4v6" fill="none" stroke="#e00" stroke-width="1.300"/></symbol>
<symbol id="e24" viewBox="0 0 20 20"><g transform="translate(1 1) scale(1.100)"><use href="#s-rp3" width="16" height="16"/></g></symbol>
<symbol id="e25" viewBox="0 0 20 20"><path d="M1 1h16v12H1z" fill="#fff" stroke="#111" stroke-width="1.400"/><path d="M4 4h8v6H4z" fill="#ccc" stroke="#555"/><g transform="translate(4 4)"><use href="#docr"/></g></symbol>
<symbol id="e26" viewBox="0 0 20 20"><path d="M0 8h16M8 0v16" stroke="#111" stroke-width="1.800"/><g transform="translate(4 4)"><use href="#docr"/></g></symbol>
<symbol id="e27" viewBox="0 0 20 20"><path d="M1 2h17v4H1z" fill="#fff" stroke="#111"/><path d="M4 2v2M7 2v2M10 2v2M13 2v2M16 2v2" stroke="#111"/><path d="M3 10v5h3" fill="none" stroke="#111"/><g transform="translate(4 4)"><use href="#doc"/></g></symbol>
<symbol id="e28" viewBox="0 0 20 20"><path d="M1 4h14M1 8h12M1 12h10M1 16h9" stroke="#334"/><path d="M13 2l2 2-2 2" stroke="#334" fill="none"/><g transform="translate(4 4)"><use href="#doc"/></g></symbol>
<symbol id="e29" viewBox="0 0 20 20"><path d="M1 17V7l4-4 2 3 3-5 3 6v10H1z" fill="#94a8ba" stroke="#234"/><g transform="translate(4 4)"><use href="#doc"/></g></symbol>
<symbol id="e30" viewBox="0 0 20 20"><path d="M1 3l16-1v6L1 9zM1 9v6h14" fill="#8aa0b2" stroke="#234"/><path d="M17 8l2 6" stroke="#234"/><g transform="translate(4 4)"><use href="#doc"/></g></symbol>
<symbol id="e31" viewBox="0 0 20 20"><rect x="1" y="1" width="16" height="17" fill="#b5c5d5" stroke="#234" stroke-width="1.500"/><path d="M2 2l14 15M16 2L2 17" stroke="#e00"/><g transform="translate(4 4)"><use href="#doc"/></g></symbol>
<!-- tree icons -->
<symbol id="tp" viewBox="0 0 14 16"><path d="M1.500 1.500h8l3 3v9l-1 1h-9l-1-1z" fill="#fff" stroke="#000" stroke-width="1"/><path d="M9.500 1.500v3h3" fill="none" stroke="#000"/><path d="M2 15.500h10" stroke="#888"/></symbol>
<symbol id="td" viewBox="0 0 14 16"><path d="M.5.500h13v15H.500z" fill="#fff" stroke="#000"/><path d="M1 3h12" stroke="#000"/><path d="M2 5h9v3H2z" fill="#000"/><path d="M3 8v3M6 8v2M9 8v3" stroke="#000"/><path d="M11 1v14" stroke="#000"/><path d="M12 12h2v3h-2z" fill="#e00"/><path d="M1 13h9" stroke="#aaa"/></symbol>
<symbol id="ts" viewBox="0 0 12 12"><path d="M3 2h8L9 5H1zM3 5h8L9 8H1zM3 8h8L9 11H1z" fill="#fff" stroke="#000"/></symbol>
<symbol id="tz1" viewBox="0 0 16 14"><path d="M1 1v12h14" fill="none" stroke="#7a5a20"/><path d="M3 12c1-10 3-8 4-3s2 4 3 0" fill="none" stroke="#e00"/><path d="M8 12h6M13 0v6M10 3h6" stroke="#e00"/></symbol>
<symbol id="tz2" viewBox="0 0 16 14"><path d="M1 1v12h14" fill="none" stroke="#1a2a8a"/><path d="M2 11l2-6 2 6 2-5 2 6 2-4" fill="none" stroke="#1a2ae0"/><path d="M13 0v6M10 3h6" stroke="#e00"/></symbol>
<symbol id="tf1" viewBox="0 0 15 13"><path d="M.5 3.500h14v9H.500z" fill="#f6dc7a" stroke="#000"/><path d="M.5 1.500h5l1 2H.500z" fill="#e43a18" stroke="#000"/><path d="M3 2h10v4H3z" fill="#e43a18"/></symbol>
<symbol id="tf2" viewBox="0 0 15 13"><path d="M.5 3.500h14v9H.500z" fill="#f6e47a" stroke="#000"/><path d="M.5 1.500h5l1 2H.500z" fill="#f0c860" stroke="#000"/><path d="M7 2c2 2 1 6-2 8h6" fill="none" stroke="#000" stroke-width="1.500"/></symbol>
<symbol id="tf3" viewBox="0 0 15 13"><path d="M.5 3.500h14v9H.500z" fill="#f6e47a" stroke="#000"/><path d="M.5 1.500h5l1 2H.500z" fill="#f0c860" stroke="#000"/><path d="M3 7h9" stroke="#1a2ac0"/><path d="M5 5v4M11 5v4" stroke="#d00"/></symbol>
</svg>

<header class="titlebar">
  <div class="qat">
    <svg class="i i16"><use href="#home"/></svg><svg class="i i16"><use href="#new"/></svg><svg class="i i16"><use href="#open"/></svg><svg class="i i16"><use href="#save"/></svg><svg class="i i16"><use href="#saves"/></svg><svg class="i i16"><use href="#undo"/></svg><svg class="i i16"><use href="#redo"/></svg><svg class="i i16"><use href="#undob"/></svg><i class="qsep"></i><svg class="i i16"><use href="#q1"/></svg><svg class="i i16"><use href="#q2"/></svg><svg class="i i16"><use href="#q3"/></svg><svg class="i i16"><use href="#q4"/></svg><svg class="i i16"><use href="#q5"/></svg><i class="qsep"></i><svg class="i i16"><use href="#q6"/></svg><svg class="i i16"><use href="#q7"/></svg><svg class="i i16"><use href="#q8"/></svg><svg class="i i16"><use href="#q9"/></svg><svg class="i i16"><use href="#q10"/></svg><i class="qsep"></i><svg class="i i16"><use href="#q11"/></svg><span class="as">A/S</span><svg class="i i16"><use href="#q13"/></svg><span class="dd gray"></span>
  </div>
  <div class="qat-more"><span class="bar3"></span></div>
  <div class="wintitle">ideCAD Statik -&nbsp; - [2. KAT TAVANI,&nbsp; 9.00 KOTU]</div>
  <div class="winbtns"><svg class="wb" viewBox="0 0 14 14"><path d="M2 8h10" stroke="#888"/></svg><svg class="wb" viewBox="0 0 14 14"><path d="M3 4h8v9H3zM5 4V2h7v8h-1" fill="none" stroke="#888"/></svg><svg class="wb" viewBox="0 0 14 14"><path d="M2 1l10 11M12 1L2 12" stroke="#888"/></svg></div>
</header>

<div class="logo"><span class="logo-e">e</span><span class="logo-c">CAD</span></div>

<nav class="tabs">
  <a class="tab active">Betonarme</a><a class="tab w67">Objeler</a><a class="tab w68">Değiştir</a><a class="tab w63">Araçlar</a><a class="tab w65">Ayarlar</a><a class="tab w74">Görüntü</a><a class="tab w118">Analiz ve Tasarım</a><a class="tab w188">Analiz ve Tasarım Görüntüleme</a><a class="tab w75">Raporlar</a><a class="tab w463">Çizimler</a>
  <div class="search"><svg class="i i12" viewBox="0 0 16 16"><circle cx="7" cy="7" r="5" fill="none" stroke="#8a9aa8" stroke-width="1.400"/><path d="M11 11l4 4" stroke="#8a9aa8" stroke-width="1.600"/></svg><span>Herhangi bir komut ara...</span></div>
  <div class="search-dd"><span class="dd"></span></div>
  <svg class="i i18 ml6"><use href="#s-st"/></svg>
  <svg class="i i18 ml6"><use href="#s-st"/></svg>
  <div class="layer"><svg class="i i12" viewBox="0 0 16 16"><rect x="1" y="1" width="14" height="14" fill="#fff" stroke="#000" stroke-width="2"/><path d="M3 3l10 10M13 3L3 13" stroke="#000" stroke-width="2"/></svg><svg class="i i14" viewBox="0 0 16 16"><path d="M1 6h10v9H1z" fill="#dde" stroke="#345"/><path d="M9 6V3a2.500 2.500 0 0 1 5 0v2" fill="none" stroke="#333"/></svg><span>Standart</span><span class="dd auto"></span></div>
  <div class="gorunum"><span>Görünüm</span><span class="dd"></span></div>
  <svg class="i i16"><use href="#v2"/></svg>
  <i class="qsep tall"></i>
  <svg class="i i18" viewBox="0 0 16 16"><rect x="1" y="1" width="14" height="14" fill="#2f62c0" stroke="#134"/><text x="5" y="12" class="iw">?</text></svg>
  <span class="dd ml6"></span>
  <span class="mdi">_</span><span class="mdi">❐</span><span class="mdi">✕</span>
</nav>

<section class="ribbon">
  <div class="g w203">
    <div class="gb">
      <div class="big w38"><svg class="bi"><use href="#b-gear"/></svg><span>Analiz<br>Ayarları</span></div>
      <div class="big w46"><svg class="bi"><use href="#b-list"/></svg><span>Kat<br>listesi</span></div>
      <div class="cmds">
        <div class="cmd"><svg class="i i16"><use href="#s-genel"/></svg>Kat Genel Ayarları</div>
        <div class="cmd"><svg class="i i16"><use href="#s-kop"/></svg>Kat Kopyala</div>
        <div class="cmd"><svg class="i i16"><use href="#s-chk"/></svg>Yarı Rijit</div>
      </div>
    </div>
    <div class="gl">Proje Ayarları</div>
  </div>
  <div class="g w75">
    <div class="gb pl2">
      <div class="big w44"><svg class="bi"><use href="#b-aks"/></svg><span>Aks</span><b class="dd"></b></div>
      <div class="col w18"><svg class="i i16"><use href="#s-a1"/></svg><svg class="i i16"><use href="#s-a2"/></svg><svg class="i i16"><use href="#s-a3"/></svg></div>
    </div>
    <div class="gl">Aks</div>
  </div>
  <div class="g w74">
    <div class="gb pl2">
      <div class="big w44"><svg class="bi"><use href="#b-duvar"/></svg><span>Duvar</span><b class="dd"></b></div>
      <div class="col w20"><svg class="i i16"><use href="#s-d1"/></svg><svg class="i i16"><use href="#s-d2"/></svg><svg class="i i16"><use href="#s-d3"/></svg></div>
    </div>
    <div class="gl">Duvar</div>
  </div>
  <div class="g w438">
    <div class="gb pl2">
      <div class="big w45"><svg class="bi"><use href="#b-kolon"/></svg><span>Kolon</span><b class="dd"></b></div>
      <div class="col w18"><svg class="i i16"><use href="#s-k1"/></svg><svg class="i i16"><use href="#s-k2"/></svg><svg class="i i16"><use href="#s-k3"/></svg></div>
      <i class="sep w17"></i>
      <div class="big w36"><svg class="bi"><use href="#b-kiris"/></svg><span>Kiriş</span><b class="dd"></b></div>
      <i class="sp w6"></i>
      <div class="col w18"><svg class="i i16"><use href="#s-b1"/></svg><svg class="i i16"><use href="#s-b2"/></svg><svg class="i i16"><use href="#s-b3"/></svg></div>
      <i class="sep w16"></i>
      <div class="big w38"><svg class="bi"><use href="#b-perde"/></svg><span>Perde</span><b class="dd"></b></div>
      <i class="sep w8"></i>
      <div class="big w50"><svg class="bi"><use href="#b-dos"/></svg><span>Döşeme</span><b class="dd"></b></div>
      <div class="col w16"><svg class="i i16"><use href="#s-ye"/></svg><svg class="i i16"><use href="#s-bx"/></svg><svg class="i i16"><use href="#s-crn"/></svg></div>
      <i class="sp w8"></i>
      <div class="col w18"><svg class="i i16"><use href="#s-st"/></svg><svg class="i i16"><use href="#s-hs"/></svg><svg class="i i16"><use href="#s-bl"/></svg></div>
      <i class="sp w9"></i>
      <div class="col w18"><svg class="i i16"><use href="#s-tb"/></svg><svg class="i i16"><use href="#s-r1"/></svg><svg class="i i16"><use href="#s-r2"/></svg></div>
      <i class="sp w7"></i>
      <div class="big w44"><svg class="bi"><use href="#b-dosk"/></svg><span>Döşeme<br>Kenarı<b class="dd in"></b></span></div>
      <i class="sep w4"></i>
      <div class="big w60"><svg class="bi"><use href="#b-mer"/></svg><span>Merdiven</span><b class="dd"></b></div>
    </div>
    <div class="gl">Betonarme</div>
  </div>
  <div class="g w241">
    <div class="gb pl2">
      <div class="big w46"><svg class="bi"><use href="#b-sur"/></svg><span>Sürekli<br>Temel<b class="dd in"></b></span></div>
      <div class="col w20"><svg class="i i16"><use href="#s-t1"/></svg><svg class="i i16"><use href="#s-t2"/></svg><svg class="i i16"><use href="#s-t3"/></svg></div>
      <div class="col w15 arr"><b class="dd"></b><b class="dd"></b><b class="dd"></b></div>
      <i class="sep w2"></i>
      <div class="col w32"><svg class="i i16"><use href="#s-l"/></svg><svg class="i i16"><use href="#s-ft"/></svg></div>
      <i class="sep w2"></i>
      <i class="sp w3"></i>
      <div class="big w46"><svg class="bi"><use href="#b-rad"/></svg><span>Radye<br>Temel<b class="dd in"></b></span></div>
      <div class="col w20"><svg class="i i16"><use href="#s-ye"/></svg><svg class="i i16"><use href="#s-bx"/></svg><svg class="i i16"><use href="#s-crn"/></svg></div>
      <div class="big w53"><svg class="bi"><use href="#b-radk"/></svg><span>Radye<br>Kenarı<b class="dd in"></b></span></div>
    </div>
    <div class="gl">Temel - Zemin</div>
  </div>
  <div class="g w77">
    <div class="gb"><div class="big w77"><svg class="bi"><use href="#b-isk"/></svg><span>İskele<br>Makrosu<b class="dd in"></b></span></div></div>
    <div class="gl">İskele Ayarları</div>
  </div>
  <div class="g w110">
    <div class="gb">
      <div class="big w66"><svg class="bi"><use href="#b-tb"/></svg><span>Betonarme</span><b class="dd"></b></div>
      <div class="big w36"><svg class="bi"><use href="#b-tc"/></svg><span>Çelik</span><b class="dd"></b></div>
    </div>
    <div class="gl">Tasarım</div>
  </div>
  <div class="g w189">
    <div class="gb">
      <div class="big w50"><svg class="bi"><use href="#b-sec"/></svg><span>Seçmeli<br>Raporlar</span></div>
      <i class="sp w3"></i>
      <div class="col w18"><svg class="i i16"><use href="#s-rp1"/></svg><svg class="i i16"><use href="#s-rp2"/></svg><svg class="i i16"><use href="#s-rp3"/></svg></div>
      <i class="sep w10"></i>
      <div class="big w62"><svg class="bi"><use href="#b-rb"/></svg><span>Betonarme</span><b class="dd"></b></div>
      <div class="big w42"><svg class="bi"><use href="#b-rc"/></svg><span>Çelik</span><b class="dd"></b></div>
    </div>
    <div class="gl">Raporlar</div>
  </div>
  <div class="g w115">
    <div class="gb">
      <div class="big w66"><svg class="bi"><use href="#b-cb"/></svg><span>Betonarme</span><b class="dd"></b></div>
      <div class="big w42"><svg class="bi"><use href="#b-ci"/></svg><span>İskele<br>Çizimleri</span></div>
    </div>
    <div class="gl">Çizim Oluştur</div>
  </div>
  <div class="g w238">
    <div class="gb">
      <div class="big w48"><svg class="bi"><use href="#b-kati"/></svg><span>Katı<br>Model</span></div>
      <div class="big w36"><svg class="bi"><use href="#b-amo"/></svg><span>Analiz<br>Modeli</span></div>
      <i class="sep w10"></i>
      <div class="big w44"><svg class="bi"><use href="#b-adu"/></svg><span>Duvar</span><b class="dd"></b></div>
      <i class="sep w2"></i>
      <div class="big w50"><svg class="bi"><use href="#b-mod"/></svg><span>Modal</span><b class="dd"></b></div>
      <div class="big w40"><svg class="bi"><use href="#b-mom"/></svg><span>Moment<br>3-3<b class="dd in"></b></span></div>
    </div>
    <div class="gl">&nbsp;</div>
  </div>
  <div class="g w58">
    <div class="gb"><div class="big w58"><svg class="bi"><use href="#b-zap"/></svg><span>Analiz<br>Tasarım<b class="dd in"></b></span></div></div>
    <div class="gl">Analiz</div>
  </div>
</section>

<section class="tools">
  <div class="tbar tb1">
    <svg class="t"><use href="#z1"/></svg><svg class="t"><use href="#z2"/></svg><i class="ts"></i>
    <svg class="t"><use href="#w1"/></svg><svg class="t"><use href="#w2"/></svg><svg class="t"><use href="#w3"/></svg><i class="ts"></i>
    <svg class="t"><use href="#w4"/></svg><svg class="t"><use href="#w5"/></svg><i class="ts"></i>
    <svg class="t"><use href="#m1"/></svg><svg class="t"><use href="#m2"/></svg><svg class="t"><use href="#m3"/></svg><svg class="t"><use href="#m4"/></svg><svg class="t"><use href="#m5"/></svg><svg class="t"><use href="#m6"/></svg><svg class="t"><use href="#m7"/></svg><i class="ts"></i>
    <svg class="t"><use href="#t1"/></svg><svg class="t"><use href="#t2"/></svg><svg class="t"><use href="#t3"/></svg><svg class="t"><use href="#t4"/></svg><svg class="t"><use href="#t5"/></svg><svg class="t"><use href="#t6"/></svg><svg class="t"><use href="#t7"/></svg><svg class="t"><use href="#t8"/></svg><svg class="t"><use href="#t9"/></svg><svg class="t"><use href="#t10"/></svg><svg class="t"><use href="#t11"/></svg><i class="ts"></i>
    <svg class="t"><use href="#g1"/></svg><svg class="t"><use href="#g2"/></svg><svg class="t"><use href="#g3"/></svg><i class="ts"></i>
    <svg class="t"><use href="#d1"/></svg><span class="t tA">A</span><svg class="t"><use href="#d3"/></svg><svg class="t"><use href="#d4"/></svg><svg class="t"><use href="#d5"/></svg><svg class="t"><use href="#d6"/></svg><svg class="t"><use href="#d7"/></svg><svg class="t"><use href="#d8"/></svg><svg class="t"><use href="#d9"/></svg><svg class="t"><use href="#d10"/></svg><svg class="t"><use href="#d11"/></svg><svg class="t"><use href="#d12"/></svg><svg class="t"><use href="#d13"/></svg><i class="ts"></i>
    <svg class="t"><use href="#l1"/></svg><svg class="t"><use href="#l2"/></svg><i class="ts"></i>
    <svg class="t"><use href="#p1"/></svg><svg class="t"><use href="#p2"/></svg><i class="ts"></i>
    <svg class="t"><use href="#a1"/></svg><svg class="t"><use href="#a2"/></svg><i class="ts"></i>
    <svg class="t"><use href="#xy"/></svg><svg class="t"><use href="#zz"/></svg><svg class="t"><use href="#p3"/></svg><svg class="t"><use href="#pc"/></svg>
    <span class="grip"></span>
  </div>
  <div class="tbar tb2">
    <i class="dots"></i>
    <svg class="t"><use href="#y1"/></svg><svg class="t"><use href="#y2"/></svg><svg class="t"><use href="#y3"/></svg><svg class="t"><use href="#y4"/></svg><svg class="t"><use href="#y5"/></svg><svg class="t"><use href="#y6"/></svg><svg class="t"><use href="#gf1"/></svg><svg class="t"><use href="#gf2"/></svg><svg class="t"><use href="#gf3"/></svg><svg class="t"><use href="#gf4"/></svg><svg class="t"><use href="#zap"/></svg><i class="ts"></i>
    <svg class="t"><use href="#gr1"/></svg><svg class="t"><use href="#gr2"/></svg>
    <span class="grip"></span>
  </div>
  <div class="tbar tb3">
    <i class="dots"></i>
    <svg class="t"><use href="#gr3"/></svg><svg class="t"><use href="#gr4"/></svg>
    <i class="filler"></i>
    <svg class="t"><use href="#v1"/></svg><svg class="t"><use href="#v2"/></svg><svg class="t"><use href="#v3"/></svg><svg class="t"><use href="#v4"/></svg><svg class="t"><use href="#v5"/></svg><svg class="t"><use href="#v6"/></svg>
    <span class="grip"></span>
  </div>
</section>

<main class="main">
  <aside class="lstrip">
    <div class="lstrip-in">
      <i class="dots"></i>
      <svg class="ls"><use href="#e2"/></svg><i class="lsep"></i><svg class="ls"><use href="#w3"/></svg><svg class="ls"><use href="#q2"/></svg><svg class="ls"><use href="#v1"/></svg><svg class="ls lt"><use href="#m2"/></svg><svg class="ls"><use href="#e6"/></svg><i class="lsep"></i><svg class="ls"><use href="#d10"/></svg><i class="lsep"></i><svg class="ls"><use href="#e2"/></svg><i class="lsep"></i><svg class="ls"><use href="#s-kop"/></svg><svg class="ls"><use href="#e3"/></svg><svg class="ls lt"><use href="#e10"/></svg><svg class="ls"><use href="#a1"/></svg><svg class="ls"><use href="#s-b3"/></svg><svg class="ls"><use href="#p2"/></svg><svg class="ls"><use href="#g1"/></svg><i class="lsep"></i><svg class="ls"><use href="#s-hs"/></svg><svg class="ls"><use href="#v2"/></svg><svg class="ls"><use href="#t9"/></svg><svg class="ls"><use href="#t1"/></svg><i class="lsep"></i><svg class="ls"><use href="#e4"/></svg><i class="lsep"></i><span class="ls autotxt">UTO<br>BC</span><i class="lsep"></i><svg class="ls"><use href="#e7"/></svg>
    </div>
    <div class="handle"><i></i></div>
  </aside>

  <section class="tree">
    <div class="panel-t"><span>Yapı Ağacı</span><span class="pnl-btn"><svg class="i i10" viewBox="0 0 10 10"><path d="M3 1h4v5H3zM1 6h8M5 6v4" fill="none" stroke="#666"/></svg><svg class="i i10" viewBox="0 0 10 10"><path d="M1 1l8 8M9 1L1 9" stroke="#666" stroke-width="1.300"/></svg></span></div>
    <div class="tree-b">
      <div class="tree-list">
        <div class="r top l3"><i class="c"></i><svg class="ti16"><use href="#tz1"/></svg><span>Zaman Tanım Alanı Fonksiyonları</span></div>
        <div class="r top l3 last"><i class="c"></i><svg class="ti16"><use href="#tz2"/></svg><span>Zaman Tanım Alanı Durumları</span></div>
        <div class="r top l2"><i class="c"></i><svg class="ti"><use href="#tf1"/></svg><span>Nonlineer İtme Analizi</span></div>
        <div class="r top l2"><i class="c"></i><svg class="ti"><use href="#tf2"/></svg><span>Euler Burkulma Analizi</span></div>
        <div class="r top l2b"><i class="box plus"></i><i class="c5"></i><svg class="ti"><use href="#tf3"/></svg><span>Yükleme Kombinasyonları</span></div>
        <div class="r cz l1"><i class="box"></i><i class="c5"></i><svg class="tis"><use href="#ts"/></svg><span>Çizimler</span></div>

        <div class="r l2b"><i class="box"></i><i class="c5"></i><svg class="ti"><use href="#tp"/></svg><span>3. KAT</span></div>
        <div class="r l3"><i class="c"></i><svg class="ti"><use href="#td"/></svg><span>3. KAT Kalıp Planı</span></div>
        <div class="r l3 last"><i class="c"></i><svg class="ti"><use href="#td"/></svg><span>3. KAT-Kiriş Açılımları-1. Pafta</span></div>
        <div class="r l2b"><i class="box"></i><i class="c5"></i><svg class="ti"><use href="#tp"/></svg><span>2. KAT</span></div>
        <div class="r l3"><i class="c"></i><svg class="ti"><use href="#td"/></svg><span>2. KAT Kalıp Planı</span></div>
        <div class="r l3"><i class="c"></i><svg class="ti"><use href="#td"/></svg><span>2. KAT-Kiriş Açılımları-1. Pafta</span></div>
        <div class="r l3 last"><i class="c"></i><svg class="ti"><use href="#td"/></svg><span>2. KAT-Kaset Açılımları-1. Pafta</span></div>
        <div class="r l2"><i class="c"></i><svg class="ti"><use href="#tp"/></svg><span>1. KAT</span></div>
        <div class="r l2b"><i class="box"></i><i class="c5"></i><svg class="ti"><use href="#tp"/></svg><span>ZEMİN KAT</span></div>
        <div class="r l3"><i class="c"></i><svg class="ti"><use href="#td"/></svg><span>ZEMİN KAT Kalıp Planı</span></div>
        <div class="r l3"><i class="c"></i><svg class="ti"><use href="#td"/></svg><span>ZEMİN KAT-Kiriş Açılımları-1. Pafta</span></div>
        <div class="r l3 last"><i class="c"></i><svg class="ti"><use href="#td"/></svg><span>ZEMİN KAT-Kaset Açılımları-1. Pafta</span></div>
        <div class="r l2b"><i class="box"></i><i class="c5"></i><svg class="ti"><use href="#tp"/></svg><span>1. BODRUM</span></div>
        <div class="r l3"><i class="c"></i><svg class="ti"><use href="#td"/></svg><span>1. BODRUM Kalıp Planı</span></div>
        <div class="r l3"><i class="c"></i><svg class="ti"><use href="#td"/></svg><span>1. BODRUM-Kiriş Açılımları-1. Pafta</span></div>
        <div class="r l3 last"><i class="c"></i><svg class="ti"><use href="#td"/></svg><span>1. BODRUM-Kaset Açılımları-1. Pafta</span></div>
        <div class="r l2b"><i class="box"></i><i class="c5"></i><svg class="ti"><use href="#tp"/></svg><span>2. BODRUM</span></div>
        <div class="r l3"><i class="c"></i><svg class="ti"><use href="#td"/></svg><span>-2,-1,0 Kolon Aplikasyon Planı</span></div>
        <div class="r l3"><i class="c"></i><svg class="ti"><use href="#td"/></svg><span>2. BODRUM Temel Apl. Planı</span></div>
        <div class="r l3"><i class="c"></i><svg class="ti"><use href="#td"/></svg><span>Kesit 1 / 1-1 KESİTİ</span></div>
        <div class="r l3"><i class="c"></i><svg class="ti"><use href="#td"/></svg><span>Kesit 2 / 2-2 KESİTİ</span></div>
        <div class="r l3"><i class="c"></i><svg class="ti"><use href="#td"/></svg><span>2. BODRUM Kalıp Planı</span></div>
        <div class="r l3"><i class="c"></i><svg class="ti"><use href="#td"/></svg><span>-2,-1,0,3 Kolon Aplikasyon Planı</span></div>
        <div class="r l3"><i class="c"></i><svg class="ti"><use href="#td"/></svg><span>2. BODRUM-Sürekli Temel Çizimleri-1. Pafta</span></div>
        <div class="r l3"><i class="c"></i><svg class="ti"><use href="#td"/></svg><span>2. BODRUM-Bağ Kirişi Açılımları-1. Pafta</span></div>
        <div class="r l3"><i class="c"></i><svg class="ti"><use href="#td"/></svg><span>2. BODRUM-Kiriş Açılımları-1. Pafta</span></div>
        <div class="r l3 last"><i class="c"></i><svg class="ti"><use href="#td"/></svg><span>2. BODRUM-Kaset Açılımları-1. Pafta</span></div>
        <div class="r l2"><i class="c"></i><svg class="ti"><use href="#tp"/></svg><span>3. BODRUM</span></div>
        <div class="r l2b"><i class="box"></i><i class="c5"></i><svg class="tis lay"><use href="#ts"/></svg><span>Betonarme Çizimleri</span></div>
        <div class="r l3"><i class="c"></i><svg class="ti"><use href="#td"/></svg><span>TÜM PROJE-Perde Düşey Açılımları-1. Pafta</span></div>
        <div class="r l3"><i class="c"></i><svg class="ti"><use href="#td"/></svg><span>TÜM PROJE-Kolon Düşey Açılımları-1. Pafta</span></div>
        <div class="r l3"><i class="c"></i><svg class="ti"><use href="#td"/></svg><span>2. BODRUM Merdiven Çizimleri</span></div>
        <div class="r l3"><i class="c"></i><svg class="ti"><use href="#td"/></svg><span>2. BODRUM Kalıp İskelesi Plan Çizimleri</span></div>
        <div class="r l3"><i class="c"></i><svg class="ti"><use href="#td"/></svg><span>1. BODRUM Kalıp İskelesi Plan Çizimleri</span></div>
        <div class="r l3"><i class="c"></i><svg class="ti"><use href="#td"/></svg><span>ZEMİN KAT Kalıp İskelesi Plan Çizimleri</span></div>
        <div class="r l3"><i class="c"></i><svg class="ti"><use href="#td"/></svg><span>1. KAT Kalıp İskelesi Plan Çizimleri</span></div>
        <div class="r l3"><i class="c"></i><svg class="ti"><use href="#td"/></svg><span>2. KAT Kalıp İskelesi Plan Çizimleri</span></div>
        <div class="r l3 last"><i class="c"></i><svg class="ti"><use href="#td"/></svg><span>3. KAT Kalıp İskelesi Plan Çizimleri</span></div>
        <div class="r l2b"><i class="box"></i><i class="c5"></i><svg class="tis lay"><use href="#ts"/></svg><span>Çelik Çizimleri</span></div>
      </div>
      <div class="tree-scroll"><i></i></div>
    </div>
  </section>

  <section class="canvas">
    <svg class="cad" viewBox="353 158 1480 821" xmlns="http://www.w3.org/2000/svg">
      <rect x="353" y="158" width="1480" height="821" fill="#000"/>
      <g fill="#0c1a24">
        <rect x="478" y="158" width="187" height="271"/><rect x="478" y="448" width="187" height="111"/>
        <rect x="665" y="158" width="69" height="40"/><rect x="822" y="158" width="181" height="40"/><rect x="1007" y="158" width="147" height="40"/>
        <rect x="579" y="385" width="86" height="44" fill="#000"/>
      </g>
      <g fill="none" stroke="#f2f200">
        <path d="M478.500 158V211.500H530.500V158M541.500 158V211.500H594.500V158M605.500 158V211.500H657.500V158"/>
        <path d="M478.500 221.500h52v52h-52zM541.500 221.500h53v52h-53zM605.500 221.500h52v52h-52z"/>
        <path d="M478.500 286.500h52v49h-52zM541.500 286.500h53v49h-53zM605.500 286.500h52v49h-52z"/>
        <path d="M478.500 347.500h52v52h-52zM541.500 347.500h53v52h-53zM605.500 347.500h52v52h-52z"/>
        <path d="M483 412.500h47.500V429M478.500 412.500V429M541.500 429V412.500h53V429M605.500 429V412.500h52V429"/>
        <path d="M665 158v40M706 158v40M720 158v40M785 158v40M823 158v40M850 158v40M858 158v40M905 158v40M972 158v40M1003 158v40M1061 158v40M1173 158v40M1172 158v40"/>
      </g>
      <g fill="none" stroke="#5ee85e" stroke-width="1"><path d="M668.500 158v40M657 158v40M696 158v40M873 158v40M988 158v40M1098 158v40M1083 158v40"/></g>
      <g fill="none" stroke="#3b3ba6" stroke-width="3"><path d="M547 158V429M907 158v40M1079 158v40"/></g>
      <path d="M353 258.500h107M353 407.500h107M353 555.500h107M353 704.500h312M608.500 385V979M757.500 905v74M905.500 905v74M1055.500 905v74M1202.500 905v74M734 158v40M756 158v40" stroke="#555" fill="none"/>
      <path d="M478.500 158V399M478 429.500H665M579.500 385.500H665M631 385V429M623 385V429M579.500 385V429M601.500 362.500h16v15h-16z" stroke="#8c8c8c" fill="none"/>
      <path d="M460.500 158V852" stroke="#f2f200"/>
      <path d="M478.500 448V559M483 448.500H665M587 578.500H665M587 726.500H665M483 834.500h96M483 852.500H665M478 559.500h89M587 559.500h78" stroke="#f2f200" fill="none"/>
      <path d="M478 284h187M478 503h187" stroke="#1a8a1a" stroke-width="2.500"/>
      <path d="M576.500 158V425M587.500 450V556M565 279.500h21M565 289.500h21M577 498.500h21M577 509.500h21" stroke="#1a8a1a" fill="none"/>
      <path d="M577 425l-4-5h8zM587.500 452l-4 5h8zM587.500 556l-4-5h8z" fill="none" stroke="#1a8a1a"/>
      <path d="M481 311.500h184M481 526.500h176M541.500 303v16M551 303v16" stroke="#3535a8" fill="none"/>
      <path d="M483 309l-4 2.500 4 2.500zM481 524l-4 2.500 4 2.500z" fill="#3535a8"/>
      <path d="M661 448V559" stroke="#3535a8" stroke-width="3"/>
      <g stroke="#f00" fill="none">
        <path d="M353 325.500h140m6 0h14m6 0h50m6 0h14m6 0h28m6 0h40M353 441.500h122m6 0h60m6 0h100m6 0h6M353 737.500h126m6 0h14m6 0h28m6 0h60m6 0h40M353 845.500h130m6 0h18m6 0h60m6 0h20m6 0h60"/>
        <path d="M353 852.500h108M353 875.500h76m8 0h14m6 0h46m8 0h40m8 0h14m6 0h60"/>
        <path d="M461 852V979M467.500 852V979M575.500 745V979M575.500 158V550" />
        <path d="M467.500 165V300m0 10v30m0 10v30m0 10v20M467.500 455V600m0 10v50m0 10v120m0 10v50" stroke-dasharray="38 6"/>
        <path d="M697.500 905v74M746.500 905v74M787.500 905v74M853.500 905v74M1031.500 905v74M1040.500 905v74M1150.500 905v74M686 158v40M747 158v40M775 158v40M873 158v40M1005 158v40M1033 158v40M1042 158v40M1128 158v40"/>
        <path d="M1172.500 905v24m0 10v14m0 6v20" />
      </g>
      <rect x="461" y="403" width="22" height="45" fill="url(#hatch)" stroke="#19ee19" stroke-width="1.200"/>
      <rect x="461" y="808" width="22" height="45" fill="url(#hatch)" stroke="#19ee19" stroke-width="1.200"/>
      <rect x="567.500" y="559.500" width="19" height="186" fill="url(#mag)" stroke="#e81ee8"/>
      <g fill="none" stroke="#9c9c9c">
        <path d="M476.500 557V834M480 557V840M487.500 559V826.500H565M476.500 557h90M476.500 559.500h90M476.500 670.500h90"/>
        <path d="M487 575.500h80M487 577.500h10m6 0h14m6 0h14m6 0h14m6 0h6M487 593.500h80M487 595.500h10m6 0h14m6 0h14m6 0h14m6 0h6M487 612.500h80M487 614.500h10m6 0h14m6 0h14m6 0h14m6 0h6M487 650.500h80M487 652.500h10m6 0h14m6 0h14m6 0h14m6 0h6"/>
        <path d="M565 746.500h100M565 749.500h100M567.500 757.500h98M565 746V826M567.500 746v90M571 826.500h94M571 834.500h94M571 830h8M567.500 836.500h97"/>
        <path d="M585.500 757v69M587.500 757v69M605.500 757v69M607.500 757v69M624.500 757v69M626.500 757v69M643.500 757v69M645.500 757v69M663.500 757v69"/>
      </g>
      <path d="M522.500 559V837M476 631.500h91M476 791.500h189" stroke="#2060c8" fill="none"/>
      <g fill="#8a55c8"><rect x="475" y="556" width="3" height="3"/><rect x="520" y="556" width="3" height="3"/><rect x="566" y="556" width="3" height="3"/><rect x="585" y="556" width="3" height="3"/><rect x="475" y="669" width="3" height="3"/><rect x="520" y="669" width="3" height="3"/><rect x="566" y="669" width="3" height="3"/><rect x="566" y="744" width="3" height="3"/><rect x="585" y="744" width="3" height="3"/><rect x="520" y="790" width="3" height="3"/><rect x="566" y="790" width="3" height="3"/><rect x="566" y="835" width="3" height="3"/><rect x="600" y="361" width="3" height="3"/><rect x="616" y="361" width="3" height="3"/><rect x="600" y="376" width="3" height="3"/><rect x="616" y="376" width="3" height="3"/><rect x="578" y="384" width="3" height="3"/><rect x="622" y="384" width="3" height="3"/><rect x="630" y="384" width="3" height="3"/><rect x="578" y="428" width="3" height="3"/><rect x="622" y="428" width="3" height="3"/><rect x="630" y="428" width="3" height="3"/><rect x="466" y="439" width="3" height="3"/><rect x="466" y="844" width="3" height="3"/><rect x="474" y="836" width="3" height="3"/></g>
      <circle cx="509" cy="479" r="17" fill="none" stroke="#f00"/><path d="M491 479h36" stroke="#f00"/>
      <text x="509" y="477" class="ct y11 mid">D12</text><text x="509" y="491" class="ct g11 mid">d=15</text>
      <text x="530" y="476" class="ct lg">G=0.545 tf/m²</text><text x="530" y="494" class="ct lg">Q=0.35 tf/m²</text>
      <text x="497" y="443" class="ct yb">Ka 25/50</text><text x="602" y="569" class="ct yb">Kb 25/50</text><text x="602" y="740" class="ct yb">K16 25/50</text><text x="497" y="848" class="ct yb">K17 25/50</text>
      <text transform="translate(474 387) rotate(-90)" class="ct yb">K21 25/50</text>
      <text transform="translate(474 792) rotate(-90)" class="ct yb">K20 25/50</text>
      <text transform="translate(582 730) rotate(-90)" class="ct y14">P1 250/25</text>
      <text x="441" y="399" class="ct gs">S 8</text><text x="433" y="803" class="ct gs">S 11</text>
      <text x="487" y="399" class="ct gs">30/60</text><text x="487" y="803" class="ct gs">30/60</text>
      <rect x="1211" y="158" width="6" height="821" fill="#e9e9e9"/><rect x="1212" y="158" width="1" height="821" fill="#8a8a8a"/>
      <rect x="1219" y="188" width="25" height="20" fill="#f00"/>
      <text x="1220" y="174" class="ct red">Tüm yetersizlikler</text>
      <rect x="1191" y="160" width="18" height="16" fill="#d0d0d0" stroke="#666"/><path d="M1195 174l5-11 5 11" fill="none" stroke="#222"/>
      <g fill="#d0d0d0" stroke="#444"><rect x="1780" y="161" width="17" height="16"/><rect x="1797" y="161" width="17" height="16"/><rect x="1814" y="161" width="17" height="16"/></g>
      <path d="M1783 163h11l-4 6v6h-3v-6zM1801 175v-12l8 12v-12M1817 175l5-12 5 12" fill="none" stroke="#222"/>
    </svg>
  </section>

  <div class="rtab"><span>Rapor Çizimleri</span></div>

  <aside class="rc ca">
    <div class="rp rp1">
      <i class="rdots"></i>
      <svg class="ri"><use href="#c1"/></svg><svg class="ri"><use href="#c2"/></svg><svg class="ri"><use href="#c3"/></svg><svg class="ri"><use href="#c4"/></svg><i class="rsep"></i>
      <svg class="ri"><use href="#c5"/></svg><svg class="ri"><use href="#c6"/></svg><svg class="ri"><use href="#c7"/></svg><svg class="ri"><use href="#c8"/></svg><svg class="ri"><use href="#c9"/></svg><i class="rsep"></i>
      <svg class="ri"><use href="#c10"/></svg><svg class="ri"><use href="#c11"/></svg><svg class="ri"><use href="#c12"/></svg><svg class="ri"><use href="#c13"/></svg><i class="rsep"></i>
      <svg class="ri"><use href="#c14"/></svg><svg class="ri"><use href="#c15"/></svg><svg class="ri"><use href="#c16"/></svg><svg class="ri"><use href="#c17"/></svg><svg class="ri"><use href="#c18"/></svg><i class="rsep"></i>
      <svg class="ri"><use href="#c19"/></svg><svg class="ri"><use href="#c20"/></svg>
      <div class="handle"><i></i></div>
    </div>
    <div class="rp rp2">
      <i class="rdots"></i>
      <svg class="ri"><use href="#c21"/></svg><svg class="ri"><use href="#c22"/></svg><svg class="ri"><use href="#c23"/></svg>
      <div class="handle"><i></i></div>
    </div>
  </aside>
  <aside class="rc cb">
    <div class="rp rp3">
      <i class="rdots"></i>
      <svg class="ri"><use href="#e1"/></svg><i class="rsep"></i>
      <svg class="ri"><use href="#e2"/></svg><svg class="ri"><use href="#e2"/></svg><svg class="ri"><use href="#e2"/></svg><svg class="ri"><use href="#e3"/></svg><svg class="ri"><use href="#e4"/></svg><i class="rsep"></i>
      <svg class="ri"><use href="#e5"/></svg><svg class="ri"><use href="#e6"/></svg><svg class="ri"><use href="#e7"/></svg><svg class="ri"><use href="#e8"/></svg><svg class="ri"><use href="#e9"/></svg><svg class="ri"><use href="#e10"/></svg><svg class="ri"><use href="#e11"/></svg><svg class="ri"><use href="#e12"/></svg><svg class="ri"><use href="#e13"/></svg><svg class="ri"><use href="#e14"/></svg><svg class="ri"><use href="#e14"/></svg><svg class="ri"><use href="#e15"/></svg><i class="rsep"></i>
      <svg class="ri"><use href="#e16"/></svg><svg class="ri"><use href="#e17"/></svg><svg class="ri"><use href="#e18"/></svg><svg class="ri"><use href="#e19"/></svg><i class="rsep"></i>
      <svg class="ri"><use href="#e20"/></svg><svg class="ri"><use href="#e21"/></svg><svg class="ri"><use href="#e22"/></svg><i class="rsep"></i>
      <svg class="ri"><use href="#e23"/></svg><i class="rsep"></i>
      <svg class="ri"><use href="#e24"/></svg><svg class="ri"><use href="#e25"/></svg><svg class="ri"><use href="#e26"/></svg>
      <div class="handle"><i></i></div>
    </div>
    <div class="rp rp4">
      <i class="rdots"></i>
      <svg class="ri"><use href="#e27"/></svg><svg class="ri"><use href="#e28"/></svg><svg class="ri"><use href="#e29"/></svg><svg class="ri"><use href="#e30"/></svg><svg class="ri"><use href="#e31"/></svg>
      <div class="handle"><i></i></div>
    </div>
  </aside>
</main>

<div class="coord">
  <div class="coord-t"><span>Koordinat Kutusu</span><svg class="i i10" viewBox="0 0 10 10"><path d="M1 1l8 8M9 1L1 9" stroke="#777" stroke-width="1.300"/></svg></div>
  <div class="coord-b">
    <i class="cb-box"></i><label>X</label><span class="fld">-1917.57 cm</span><label class="lb2">L</label><span class="fld">2296.35 cm</span>
    <i class="cb-box"></i><label>Y</label><span class="fld">1111.82 cm</span><label class="lb2">A</label><span class="fld">329.894</span>
    <i class="cb-box"></i><label>Z</label><span class="fld off">600 cm</span>
  </div>
</div>

<div class="dialog">
  <div class="dlg-t"><span>Veri Girişlerini Denetle</span><b class="dlg-x">×</b></div>
  <div class="dlg-l">
    <div class="hd"><span>Çizgi</span><span>Hata/Uyarı</span><span>Objeler</span><span>Sonuçlar</span></div>
    <div class="sec">3. KAT</div>
    <div class="rw"><span>1</span><span>Hata</span><span>P3101, K3790</span><span>Üst üste objeler</span></div>
    <div class="sec">2. KAT</div>
    <div class="rw"><span>2</span><span>Hata</span><span>N215</span><span>Kaset döşeme tipik kiriş tanımlaması hatalı</span></div>
    <div class="rw"><span>3</span><span>Uyarı</span><span>N213, N211</span><span>Muhtelemen hatalı tipik diş sürekliliği tanımı</span></div>
    <div class="sec">1. KAT</div>
    <div class="rw"><span>4</span><span>Uyarı</span><span>N115, N112</span><span>Muhtelemen hatalı tipik diş sürekliliği tanımı</span></div>
    <div class="sec">ZEMİN KAT</div>
    <div class="rw"><span>5</span><span>Uyarı</span><span>NZ15, NZ12</span><span>Muhtelemen hatalı tipik diş sürekliliği tanımı</span></div>
    <div class="sec">1. BODRUM</div>
    <div class="rw"><span>6</span><span>Uyarı</span><span>NB115, NB112</span><span>Muhtelemen hatalı tipik diş sürekliliği tanımı</span></div>
    <div class="sec">2. BODRUM</div>
    <div class="rw"><span>7</span><span>Hata</span><span>PB208, PB308 (3. BODRUM)</span><span>Düşey süreklilik hatası</span></div>
    <div class="rw"><span>8</span><span>Hata</span><span>PB209, PB309 (3. BODRUM)</span><span>Düşey süreklilik hatası</span></div>
    <div class="sec">3. BODRUM</div>
    <div class="rw"><span>9</span><span>Uyarı</span><span>PB314, PB314</span><span>Aynı isimde objeler</span></div>
    <div class="rw"><span>10</span><span>Uyarı</span><span>PB313, PB313</span><span>Aynı isimde objeler</span></div>
    <div class="rw"><span>11</span><span>Uyarı</span><span>PB312, PB312</span><span>Aynı isimde objeler</span></div>
    <div class="rw"><span>12</span><span>Uyarı</span><span>PB311, PB311</span><span>Aynı isimde objeler</span></div>
    <div class="rw"><span>13</span><span>Uyarı</span><span>PB310, PB310</span><span>Aynı isimde objeler</span></div>
  </div>
  <div class="dlg-f">
    <button class="btn b1">Objeyi Seç</button>
    <button class="btn b2">İlgili katta Sonuçları Aynı Olan Objeleri seç</button>
    <button class="btn b2">Tüm Katlarda Sonuçları Aynı Olan Objeleri seç</button>
  </div>
</div>
<div class="redbox"></div>
</body>
</html>
```

FILE: styles.css
```css
*{box-sizing:border-box}
html,body{margin:0;padding:0;width:1906px;height:979px;overflow:hidden}
body{background:#ced3db;font-family:Roboto,"Open Sans",sans-serif;font-size:11.500px;color:#333;position:relative}
.sprite{position:absolute}
.i{display:block;flex:none;overflow:visible}
.i10{width:10px;height:10px}.i12{width:12px;height:12px}.i14{width:14px;height:14px}.i16{width:16px;height:16px}.i18{width:18px;height:18px}
.ic{font:9px "Liberation Sans",sans-serif;fill:#222}
.is{font:5px "Liberation Sans",sans-serif;fill:#222}
.ir{font:bold 7px "Liberation Serif",serif;fill:#b00}
.ib{font:bold 8px "Liberation Sans",sans-serif;fill:#111}
.iw{font:bold 11px "Liberation Sans",sans-serif;fill:#fff}

/* title */
.titlebar{height:18px;background:#fff;display:flex;align-items:flex-start}
.qat{margin-left:38px;width:492px;height:15px;background:#dde3ea;border-radius:0 0 14px 0;display:flex;align-items:center;padding-left:5px;gap:6.200px;overflow:hidden}
.qat .i16{margin-top:-3px}
.qsep{width:1px;height:13px;background:#999;display:block;flex:none;margin:0 -1px}
.qsep.tall{height:18px;margin:0 4px}
.as{font:11px "Liberation Sans",sans-serif;color:#222;width:16px;flex:none;margin-top:-2px}
.qat-more{margin-left:10px;width:10px;height:12px;padding-top:2px}
.bar3{display:block;width:7px;height:6px;border-top:1px solid #555;border-bottom:3px double #555}
.wintitle{margin-left:489px;font:12px/11px "Liberation Sans",sans-serif;color:#111;white-space:nowrap}
.winbtns{margin-left:auto;display:flex;gap:31px;padding-right:14px}
.wb{width:14px;height:14px;display:block}
.logo{position:absolute;left:-14px;top:-7px;width:44px;height:40px;border-radius:50%;background:radial-gradient(circle at 50% 35%,#fff 0,#e9e9e9 55%,#a9a9a9 100%);border:1px solid #9a9a9a;font:bold 10px/42px "Liberation Sans",sans-serif;text-align:right;padding-right:3px;box-shadow:0 1px 2px rgba(0,0,0,.35)}
.logo-e{color:#999}.logo-c{color:#c8181c}

/* tabs */
.tabs{height:23px;background:#d0d5dd;display:flex;align-items:center;padding-left:40px;font-size:12px;color:#4a5666}
.tab{display:block;flex:none;padding-left:0;white-space:nowrap;line-height:22px;height:22px}
.tab.active{width:80px;margin-right:17px;height:22px;background:linear-gradient(#eef4fb,#e2e9f3);border:1px solid #9fc0e0;border-bottom:0;border-radius:3px 3px 0 0;padding-left:10px}
.w67{width:67px}.w68{width:68px}.w63{width:63px}.w65{width:65px}.w118{width:118px}.w188{width:188px}.w463{width:463px}
.search{flex:none;width:200px;height:22px;background:#d8dce3;border:1px solid #b9c0ca;border-right:0;padding:2px 3px;display:flex;align-items:center;gap:4px;position:relative}
.search::after{content:"";position:absolute;left:3px;top:2px;width:194px;height:16px;background:#fff;z-index:0}
.search svg,.search span{position:relative;z-index:1}
.search span{font:italic 11.500px "Open Sans",sans-serif;color:#8d96a1}
.search-dd{flex:none;width:12px;height:22px;background:#d8dce3;border:1px solid #b9c0ca;border-left:0;display:flex;align-items:center;justify-content:center}
.ml6{margin-left:6px}
.layer{flex:none;margin-left:6px;width:133px;height:22px;background:#e4e6ea;border:1px solid #b9c0ca;display:flex;align-items:center;gap:4px;padding:0 6px 0 3px;color:#222}
.layer .auto{margin-left:auto}
.gorunum{flex:none;width:78px;padding-left:4px;display:flex;align-items:center;gap:6px}
.mdi{flex:none;width:19px;text-align:center;color:#5a6470;font:13px "DejaVu Sans",sans-serif}
.dd{display:block;width:0;height:0;border:3px solid transparent;border-top:4px solid #6a7480;border-bottom:0;flex:none}
.dd.gray{margin-top:-2px;margin-left:4px}
.big .dd{margin:2px auto 0}
.big .dd.in{display:inline-block;margin:0 0 1px 2px;vertical-align:middle}

/* ribbon */
.ribbon{height:86px;display:flex;gap:4px;padding-top:1px;background:#d0d5dd}
.g{flex:none;height:85px;border:1px solid #b3bac5;border-top-color:#c5cad2;border-radius:4px;background:linear-gradient(#f8fafc,#fff 50%,#f6f7f9);display:flex;flex-direction:column;overflow:hidden}
.g:first-child{border-left:0;border-radius:0 4px 4px 0}
.gb{height:68px;display:flex;flex:none}
.gl{flex:1;background:linear-gradient(#eef0f3,#d8dce3);text-align:center;color:#55606e;font-size:12px;line-height:15px;white-space:nowrap}
.pl2{padding-left:2px}
.big{flex:none;display:flex;flex-direction:column;align-items:center;padding-top:3px;line-height:13px;text-align:center;color:#4a5666;font-size:12px;white-space:nowrap}
.big span{display:block}
.bi{width:36px;height:36px;display:block;flex:none;margin-bottom:1px;overflow:visible}
.col{flex:none;display:flex;flex-direction:column;align-items:center;padding-top:2px;gap:7px}
.col.arr{padding-top:7px;gap:19px}
.col .dd{margin:0}
.sep{display:block;flex:none;position:relative}
.sep::after{content:"";position:absolute;left:50%;top:8px;height:56px;width:1px;background:#c7ccd3}
.sp{display:block;flex:none}
.cmds{flex:1;padding-top:2px;display:flex;flex-direction:column;gap:6.500px}
.cmd{display:flex;align-items:center;gap:3px;height:16px;padding-left:2px;color:#4a5666;font-size:12px;white-space:nowrap}
.w2{width:2px}.w3{width:3px}.w4{width:4px}.w6{width:6px}.w7{width:7px}.w8{width:8px}.w9{width:9px}.w10{width:10px}.w15{width:15px}.w16{width:16px}.w17{width:17px}.w18{width:18px}.w20{width:20px}.w32{width:32px}.w36{width:36px}.w38{width:38px}.w40{width:40px}.w42{width:42px}.w44{width:44px}.w45{width:45px}.w46{width:46px}.w48{width:48px}.w50{width:50px}.w53{width:53px}.w58{width:58px}.w60{width:60px}.w62{width:62px}.w66{width:66px}.w74{width:74px}.w75{width:75px}.w77{width:77px}.w110{width:110px}.w115{width:115px}.w189{width:189px}.w203{width:203px}.w238{width:238px}.w241{width:241px}.w438{width:438px}

/* toolbars */
.tools{height:31px;padding-top:3px;display:flex;background:#ced3db}
.tbar{flex:none;height:28px;display:flex;align-items:center;background:linear-gradient(#f1f3f7,#dfe3ea 60%,#c9ced8);border-radius:0 5px 5px 0}
.tb1{width:1215px}
.tb2{width:316px;border-radius:5px}
.tb3{width:373px;margin-left:2px;border-radius:5px 0 0 5px}
.t{flex:none;width:16px;height:16px;margin:0 3.050px;display:block;overflow:visible}
.tA{font:bold 18px/16px "Liberation Serif",serif;color:#35506a;text-align:center}
.ts{flex:none;width:1px;height:20px;margin:0 3.250px;background:#a9afb9;display:block}
.dots{flex:none;display:block;width:2px;height:14px;margin:0 4px;background:repeating-linear-gradient(#8a8f98 0 2px,transparent 2px 4px)}
.grip{flex:none;margin-left:auto;width:10px;height:28px;background:linear-gradient(#c6cbd5,#a9afbb);position:relative;border-radius:0 4px 4px 0}
.grip::after{content:"";position:absolute;left:2px;bottom:5px;border:3px solid transparent;border-top:4px solid #555;border-bottom:0}
.filler{flex:none;display:block;width:187px}

/* main */
.main{height:821px;display:flex}
.lstrip{flex:none;width:16px;height:572px;overflow:hidden;display:flex;flex-direction:column}
.lstrip-in{flex:1;background:linear-gradient(90deg,#eef1f5,#d9dde4);display:flex;flex-direction:column;align-items:flex-start;padding-top:2px;overflow:hidden}
.lstrip-in .dots{width:12px;height:2px;margin:0 0 10px;background:repeating-linear-gradient(90deg,#8a8f98 0 2px,transparent 2px 4px)}
.ls{flex:none;display:block;width:16px;height:16px;margin:2.500px 0 2.500px -5px;overflow:visible}
.lt{opacity:.55}
.lsep{display:block;flex:none;width:11px;height:1px;background:#b9bec7;margin:3px 0}
.autotxt{font:bold 7px/8px "Liberation Sans",sans-serif;color:#333;margin-left:0;overflow:hidden}
.handle{flex:none;height:11px;background:linear-gradient(#c3c8d2,#a9afbb);display:flex;align-items:center;justify-content:flex-end;padding-right:4px}
.handle i{display:block;width:0;height:0;border:3px solid transparent;border-left:4px solid #fff;border-right:0;box-shadow:-3px 0 0 -1px #fff}
.tree{flex:none;width:330px;display:flex;flex-direction:column;border-left:1px solid #7c828c}
.panel-t{flex:none;height:20px;background:#b9c0cb;display:flex;align-items:center;justify-content:space-between;padding:0 3px;color:#4a5563;font-size:12px;border-bottom:1px solid #8d939d}
.pnl-btn{display:flex;gap:8px}
.tree-b{flex:1;display:flex;min-height:0;background:#f0f0f0}
.tree-list{flex:none;width:313px;background:#fff;overflow:hidden;font:11.500px "Open Sans",sans-serif;color:#1a1a1a;padding-top:1px}
.r{--vl:linear-gradient(#777 1px,transparent 1px);height:18px;display:flex;align-items:center;white-space:nowrap;position:relative;background-image:var(--vl),var(--vl);background-size:1px 2px,1px 2px;background-repeat:repeat-y,repeat-y;background-position:12px 0,50px 0}
.r.top{background-image:var(--vl),var(--vl),var(--vl);background-size:1px 2px,1px 2px,1px 2px;background-repeat:repeat-y,repeat-y,repeat-y;background-position:12px 0,31px 0,50px 0}
.r.cz{background-image:var(--vl);background-size:1px 2px;background-repeat:repeat-y;background-position:12px 0}
.l3{padding-left:69px}
.l3::before{content:"";position:absolute;left:69px;top:0;bottom:0;border-left:1px dotted #777}
.l3.last::before{bottom:9px}
.l2{padding-left:50px}
.l2b{padding-left:46px}
.l1{padding-left:27px}
.l1 .c5{width:10px}
.c{display:block;flex:none;width:11px;border-top:1px dotted #777}
.c5{display:block;flex:none;width:6px;border-top:1px dotted #777}
.box{display:block;flex:none;width:9px;height:9px;border:1px solid #9aa3ad;background:linear-gradient(#fff,#dfe4ea);position:relative}
.box::after{content:"";position:absolute;left:1px;top:3px;width:5px;height:1px;background:#333}
.box.plus::before{content:"";position:absolute;left:3px;top:1px;width:1px;height:5px;background:#333}
.ti{flex:none;width:14px;height:15px;display:block;margin-right:7px}
.ti16{flex:none;width:16px;height:14px;display:block;margin-right:5px}
.tis{flex:none;width:12px;height:12px;display:block;margin-right:5px}
.tis.lay{margin-right:7px;margin-left:2px;height:10px}
.tree-scroll{flex:1;position:relative}
.tree-scroll i{position:absolute;left:7px;top:309px;width:2px;height:309px;background:#8f8f8f}
.canvas{flex:none;width:1480px;margin-left:7px;height:821px;overflow:hidden;background:#000}
.cad{display:block;width:1480px;height:821px;shape-rendering:crispEdges}
.cad text{shape-rendering:auto}
.ct{font-family:"Liberation Sans",sans-serif}
.y11{font-size:11px;fill:#f2f200;letter-spacing:.500px}
.g11{font-size:11px;fill:#7fe87f;letter-spacing:.500px}
.mid{text-anchor:middle}
.lg{font-size:17.500px;fill:#78e678}
.yb{font-size:15.500px;fill:#f2f200;letter-spacing:.200px}
.y14{font-size:14.500px;fill:#f2f200}
.gs{font-size:11.500px;fill:#19d819;letter-spacing:.300px}
.red{font-size:12px;fill:#f00}

/* right */
.rtab{flex:none;width:21px;margin:4px 1px 0 3px;height:115px;background:linear-gradient(90deg,#fff3c8,#ffd890);border:1px solid #c9c3a8;border-bottom:0;border-radius:3px 3px 0 0;overflow:hidden;color:#7a7660;font-size:13px;writing-mode:vertical-rl;text-align:left;padding:4px 3px 0 0;white-space:nowrap;letter-spacing:.500px}
.rc{flex:none;display:flex;flex-direction:column;gap:1px}
.ca{width:24px;margin-right:2px}
.cb{width:21px}
.rp{background:linear-gradient(90deg,#f0f3f7,#dfe3ea);display:flex;flex-direction:column;align-items:center;border-radius:0 0 4px 4px;overflow:hidden}
.rp1{height:474px}
.rp2{height:83px}
.rp3{height:678px;align-items:flex-start;padding-left:2px;margin-right:-3px}
.rp4{height:128px;margin-top:5px;align-items:flex-start;padding-left:2px;margin-right:-3px}
.rdots{display:block;flex:none;width:14px;height:2px;margin:3px 0 3.500px;background:repeating-linear-gradient(90deg,#9aa0aa 0 2px,transparent 2px 4px)}
.ri{flex:none;width:20px;height:19px;margin:1px 0;display:block;overflow:visible}
.rsep{flex:none;display:block;width:16px;height:1px;background:#bcc1c9;margin:4px 0}
.rp .handle{margin-top:auto;width:100%;padding-right:5px;align-self:stretch}

/* coord box */
.coord{position:absolute;left:1582px;top:107px;width:192px;height:93px;background:#f0f0f0;border:1px solid #aeb3ba;box-shadow:1px 2px 3px rgba(0,0,0,.35);font:12px "Liberation Sans",sans-serif;color:#222;padding-top:3px}
.coord-t{height:24px;background:#b9c0cb;display:flex;align-items:center;justify-content:space-between;padding:0 8px 0 4px;font:bold 11.500px "Open Sans",sans-serif;color:#3d4754}
.coord-b{display:grid;grid-template-columns:14px 15px 64px 27px 63px;grid-auto-rows:21px;align-items:center;padding:1px 0 0 4px;font-size:12px;letter-spacing:-.200px}
.coord-b label{font-size:11px}
.cb-box{display:block;width:12px;height:12px;border:1px solid #666;border-radius:3px;background:#f4f4f4}
.fld{display:block;height:19px;line-height:19px;background:#fff;padding-left:4px;overflow:hidden;white-space:nowrap}
.fld.off{background:#ededed}
.lb2{padding-left:6px}

/* dialog */
.dialog{position:absolute;left:663px;top:207px;width:1191px;height:698px;background:#f0f0f0;border:1px solid #b5b5b5;border-radius:5px 5px 4px 4px;box-shadow:0 2px 8px rgba(0,0,0,.3);display:flex;flex-direction:column;font-family:"Liberation Sans Narrow","Roboto Condensed",Roboto,sans-serif;font-size:12.500px;color:#1a1a1a}
.dlg-t{flex:none;height:30px;display:flex;align-items:center;justify-content:space-between;padding:0 1px 0 9px;color:#8e8e8e}
.dlg-t span{font-size:13px}
.dlg-x{display:block;width:19px;height:19px;background:#dcdcdc;color:#fff;font:bold 13px/19px "Liberation Sans",sans-serif;text-align:center}
.dlg-l{flex:1;margin-left:2px;background:#fff;border:1px solid #a8a8a8;min-height:0;overflow:hidden}
.hd{height:25px;display:grid;grid-template-columns:43px 86px 150px 1fr;width:1030px;line-height:25px}
.hd span{padding-left:6px;border-right:1px solid #e8e8e8;white-space:nowrap}
.hd span:last-child{border-right:0}
.sec{height:19px;width:1030px;background:#7a7adb;color:#fff;line-height:19px;padding-left:4px;font-size:13px}
.rw{height:19px;width:1030px;display:grid;grid-template-columns:48px 86px 150px 1fr;line-height:19px;color:#111;white-space:nowrap}
.rw span:first-child{padding-left:8px}
.rw span:last-child{letter-spacing:-.400px}
.dlg-f{flex:none;height:28px;display:flex;gap:6px;padding:3px 0 0 2px}
.btn{flex:none;height:21px;padding:0;border:1px solid #d2d2d2;border-radius:3px;background:#f7f7f7;font:inherit;color:#1a1a1a;letter-spacing:-.300px}
.b1{width:96px}
.b2{width:305px}
.redbox{position:absolute;left:650px;top:198px;width:601px;height:474px;border:5px solid #ed1c24;border-left-width:6px;pointer-events:none}
```
